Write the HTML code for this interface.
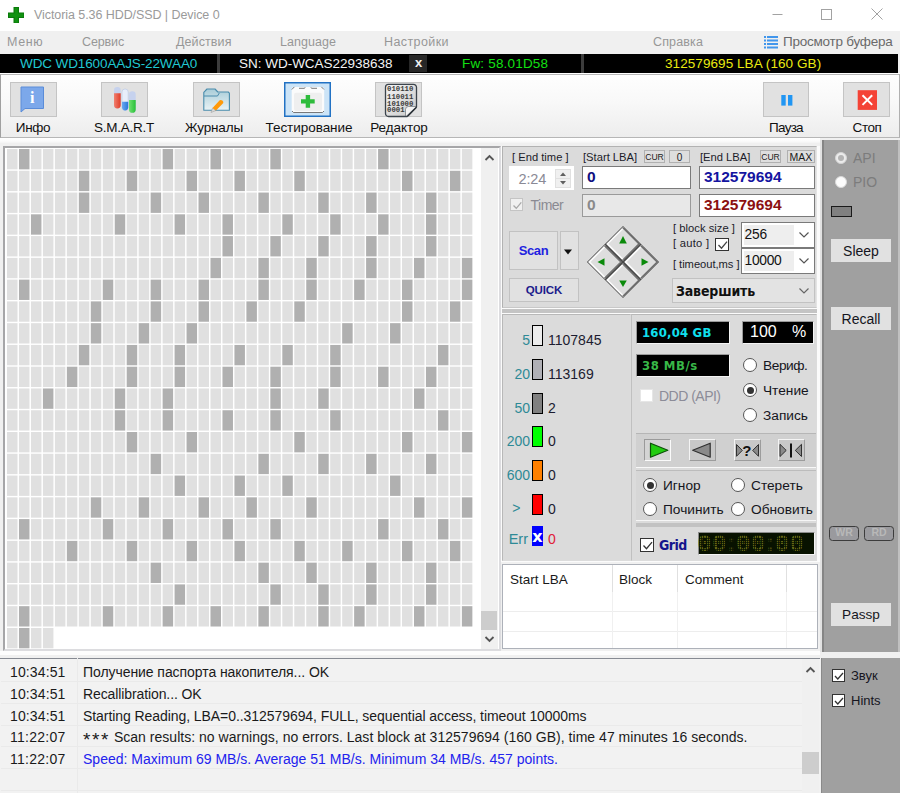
<!DOCTYPE html>
<html lang="ru">
<head>
<meta charset="utf-8">
<title>Victoria 5.36 HDD/SSD | Device 0</title>
<style>
*{box-sizing:border-box;margin:0;padding:0}
html,body{width:900px;height:793px;overflow:hidden;background:#f0f0f0}
body{position:relative;font-family:"Liberation Sans","DejaVu Sans",sans-serif;font-size:14px;color:#1a1a1a}
.abs{position:absolute}
.t{position:absolute;white-space:nowrap;line-height:1}
/* title */
#title{left:0;top:0;width:900px;height:31.500px;background:#fff}
#menu{left:0;top:31px;width:900px;height:23px;background:#f0f0f0}
#menu .t{color:#979797;font-size:12.5px;top:5px}
#drive{left:0;top:54px;width:898px;height:18.700px;background:#000}
#drive .t{font-size:13.5px;top:3px}
#drive .sep{position:absolute;top:0;width:3px;height:19px;background:#3c3c3c}
#toolbar{left:0;top:74px;width:900px;height:64px;background:linear-gradient(#fefefe,#f9f9f9 40%,#ededed);border-left:1px solid #a0a0a0;border-right:1.500px solid #b0b0b0;border-bottom:1.200px solid #b6b6b6;border-top:1.400px solid #b8b8b8}
.tb{position:absolute;top:82px;height:35px;background:#e1e1e1;border:1px solid #c4c4c4}
.tb.sel{background:#cce4f7;border-color:#2272c4;box-shadow:inset 0 0 0 .5px #2272c4}
.tl{position:absolute;top:120px;font-size:13.5px;line-height:15px;white-space:nowrap;text-align:center;color:#111}
/* panels */
.panel{position:absolute;background:#dbdbdb}
.btn{position:absolute;background:#e1e1e1;border:1px solid #c2c2c2;text-align:center;white-space:nowrap}
.lbl{position:absolute;white-space:nowrap;font-size:11.2px;line-height:12px;color:#1c1c2a}
.edit{position:absolute;background:#fff;border:1px solid #7a7a7a;font-weight:bold;white-space:nowrap}
.radio{position:absolute;width:14px;height:14px;border-radius:50%;background:#fff;border:1.200px solid #555}
.radio.on::after{content:"";position:absolute;left:2.500px;top:2.500px;width:7px;height:7px;border-radius:50%;background:#333}
.chk{position:absolute;width:14px;height:14px;background:#fff;border:1px solid #333}
.chk svg{position:absolute;left:0;top:0}
.lg{position:absolute;width:11px;height:21px;border:1px solid #000}
.lgl{position:absolute;color:#2e8a96;font-size:14px;line-height:14px;text-align:right;width:30px;white-space:nowrap}
.lgc{position:absolute;color:#1c1c30;font-size:14px;line-height:14px;white-space:nowrap}
.blk{position:absolute;background:#000;border:1px solid #9a9a9a;border-right-color:#f4f4f4;border-bottom-color:#f4f4f4;white-space:nowrap}
.rl{position:absolute;font-size:13.7px;line-height:14px;white-space:nowrap;color:#151520}
.log{position:absolute;font-size:14px;line-height:16px;white-space:nowrap;color:#1a1a1a}
</style>
</head>
<body>
<!-- title bar -->
<div id="title" class="abs">
  <svg class="abs" style="left:7.500px;top:6.500px" width="16.500" height="16.500" viewBox="0 0 15 15"><path d="M5 0h5v5h5v5h-5v5h-5v-5h-5v-5h5z" fill="#0a7a0a"/><path d="M6 1h3v5h5v3h-5v5h-3v-5h-5v-3h5z" fill="#119211"/></svg>
  <div class="t" style="left:34px;top:9px;font-size:12.5px;color:#9a9a9a;letter-spacing:-0.072px">Victoria 5.36 HDD/SSD | Device 0</div>
  <svg class="abs" style="left:765px;top:4px" width="125" height="22" viewBox="0 0 125 22" fill="none" stroke="#a2a2a2" stroke-width="1"><path d="M7.5 10.5h10"/><rect x="56.5" y="5.500" width="10" height="10"/><path d="M106.500 4.500l11 11M117.500 4.500l-11 11"/></svg>
</div>
<!-- menu -->
<div id="menu" class="abs">
  <div class="t" style="left:7px;letter-spacing:0.601px">Меню</div>
  <div class="t" style="left:82px;letter-spacing:-0.135px">Сервис</div>
  <div class="t" style="left:176px;letter-spacing:0.090px">Действия</div>
  <div class="t" style="left:280px;letter-spacing:0.047px">Language</div>
  <div class="t" style="left:384px;letter-spacing:0.411px">Настройки</div>
  <div class="t" style="left:653px;letter-spacing:0.136px">Справка</div>
  <svg class="abs" style="left:764px;top:4px" width="14" height="14" viewBox="0 0 14 14"><g fill="#4196ec"><rect x="0" y="1" width="2" height="2"/><rect x="3" y="1" width="11" height="2"/><rect x="0" y="4.500" width="2" height="2"/><rect x="3" y="4.500" width="11" height="2"/><rect x="0" y="8" width="2" height="2"/><rect x="3" y="8" width="11" height="2"/><rect x="0" y="11.500" width="2" height="2"/><rect x="3" y="11.500" width="11" height="2"/></g></svg>
  <div class="t" style="left:783px;top:4px;color:#6a6a6a;font-size:13.5px;letter-spacing:-0.239px">Просмотр буфера</div>
</div>
<!-- drive bar -->
<div id="drive" class="abs">
  <div class="t" style="left:20px;color:#20c8d2;letter-spacing:-0.113px">WDC WD1600AAJS-22WAA0</div>
  <div class="sep" style="left:217px"></div>
  <div class="t" style="left:239px;color:#f4f4f4;letter-spacing:-0.016px">SN: WD-WCAS22938638</div>
  <div class="abs" style="left:409px;top:1px;width:18px;height:17px;background:#272727"></div>
  <div class="t" style="left:415px;color:#f0f0f0;font-weight:bold;font-size:13px;top:2px">x</div>
  <div class="t" style="left:462px;color:#12e012;letter-spacing:0.179px">Fw: 58.01D58</div>
  <div class="sep" style="left:581px"></div>
  <div class="t" style="left:665px;color:#eaea10;letter-spacing:0.072px">312579695 LBA (160 GB)</div>
</div>
<div class="abs" style="left:0;top:72.700px;width:900px;height:1.500px;background:#fff"></div>
<!-- toolbar -->
<div id="toolbar" class="abs"></div>
<div class="tb" style="left:10px;width:47px"></div>
<div class="tb" style="left:101px;width:47px"></div>
<div class="tb" style="left:193px;width:47px"></div>
<div class="tb sel" style="left:284px;width:47px"></div>
<div class="tb" style="left:375px;width:47px"></div>
<div class="tb" style="left:763px;width:46px"></div>
<div class="tb" style="left:843px;width:47px"></div>
<div class="tl" style="left:3px;width:60px;letter-spacing:-0.320px">Инфо</div>
<div class="tl" style="left:84px;width:80px;letter-spacing:-0.252px">S.M.A.R.T</div>
<div class="tl" style="left:174px;width:80px;letter-spacing:-0.138px">Журналы</div>
<div class="tl" style="left:259px;width:100px;letter-spacing:-0.044px">Тестирование</div>
<div class="tl" style="left:359px;width:80px;letter-spacing:-0.078px">Редактор</div>
<div class="tl" style="left:746px;width:80px;letter-spacing:-0.743px">Пауза</div>
<div class="tl" style="left:827px;width:80px;letter-spacing:-0.452px">Стоп</div>
<!-- toolbar icons -->
<svg class="abs" style="left:0;top:74px" width="900" height="64" viewBox="0 74 900 64">
  <defs>
    <linearGradient id="gfold" x1="0" y1="0" x2="0" y2="1"><stop offset="0" stop-color="#a8ccd8"/><stop offset="1" stop-color="#eaf3f5"/></linearGradient>
    <linearGradient id="gpage" x1="0" y1="0" x2="1" y2="1"><stop offset="0" stop-color="#f4f4f4"/><stop offset="1" stop-color="#c8c8c8"/></linearGradient>
    <linearGradient id="gred" x1="0" y1="0" x2="1" y2="0"><stop offset="0" stop-color="#f08070"/><stop offset="1" stop-color="#e03c28"/></linearGradient>
    <linearGradient id="gblue" x1="0" y1="0" x2="1" y2="0"><stop offset="0" stop-color="#6aa8f0"/><stop offset="1" stop-color="#2a78d8"/></linearGradient>
    <linearGradient id="ggreen" x1="0" y1="0" x2="1" y2="0"><stop offset="0" stop-color="#70e070"/><stop offset="1" stop-color="#28c038"/></linearGradient>
  </defs>
  <!-- info bubble -->
  <path d="M21 87h22.500v21.500h-18.500l-4 3.500z" fill="#7ca8ea" stroke="#5a8cd8" stroke-width="1"/>
  <text x="32.300" y="103.300" font-family="Liberation Serif,serif" font-weight="bold" font-size="16" fill="#fff" text-anchor="middle">i</text>
  <!-- tubes -->
  <rect x="114" y="87" width="6.700" height="21.300" rx="3.200" fill="#c6d2ee"/>
  <path d="M114 93.300h6.700v11.800a3.350 3.350 0 0 1 -6.700 0z" fill="url(#gred)"/>
  <rect x="122" y="89" width="6.200" height="21.300" rx="3" fill="#e8eefa" stroke="#b4c4e4" stroke-width=".6"/>
  <path d="M122 101.700h6.200v5.600a3.100 3.100 0 0 1 -6.200 0z" fill="url(#gblue)"/>
  <rect x="129" y="91.300" width="6.700" height="21.400" rx="3.200" fill="#c6d2ee"/>
  <path d="M129 100h6.700v9.400a3.350 3.350 0 0 1 -6.700 0z" fill="url(#ggreen)"/>
  <!-- folder -->
  <path d="M203.800 110.300v-18l3.200-3.300h8l2.800 3h10.400l1.200 1.200v17.100z" fill="url(#gfold)" stroke="#4a8cac" stroke-width="1.100" stroke-linejoin="round"/>
  <path d="M204 96h13.500l1.800-3" fill="none" stroke="#4a8cac" stroke-width="1"/>
  <path d="M211 112.500l1.500-4.500 3.500 2.500z" fill="#d8d8d8" stroke="#888" stroke-width=".4"/>
  <path d="M212.500 108l7.200-7.800a2.600 2.600 0 0 1 3.600 2.800l-7.300 7.600z" fill="#ff9a0a"/>
  <!-- first-aid kit -->
  <rect x="291.700" y="87" width="32.500" height="25.700" rx="2.500" fill="#fbfbfb"/>
  <rect x="294" y="92.700" width="28" height="18.300" rx="2" fill="#efefef"/>
  <path d="M291.800 89.500l2.600-2.600M324 89.500l-2.600-2.600M299 88.300h5.500l.6-1M317 88.300h-5.500l-.6-1M292 111l1.500 1.500h29l1.500-1.500" fill="none" stroke="#6a6a6a" stroke-width=".9"/>
  <path d="M305.700 95h4.400v4.200h4.600v4.300h-4.600v4.300h-4.400v-4.300h-4.700v-4.300h4.700z" fill="#2ebc3c"/>
  <!-- binary page -->
  <path d="M388.500 84.300h25a3 3 0 0 1 3 3v19.500l-9.500 9.700h-18.500a3 3 0 0 1 -3-3v-26.200a3 3 0 0 1 3-3z" fill="url(#gpage)" stroke="#3c444c" stroke-width="1.300"/>
  <path d="M416.500 106.800l-9.500 9.700 1.500-.2 8.200-8.200z" fill="#20262c"/>
  <path d="M405.500 116v-6.500a3 3 0 0 1 3-3h7.500" fill="#f4f4f4" stroke="#3c444c" stroke-width=".5"/>
  <g font-family="Liberation Mono,monospace" font-size="7.300" fill="#3a3a3a" font-weight="bold">
    <text x="387" y="91.200">010110</text>
    <text x="387" y="98.500">110011</text>
    <text x="387" y="105.800">101000</text>
    <text x="387" y="112.400">0001</text>
  </g>
  <!-- pause -->
  <rect x="781.300" y="95" width="4.400" height="10.600" fill="#2196f3"/>
  <rect x="788" y="95" width="4.400" height="10.600" fill="#2196f3"/>
  <!-- stop -->
  <rect x="857.700" y="90.200" width="19.300" height="19.700" fill="#f44336"/>
  <path d="M862.500 95.200l9.700 9.700M872.200 95.200l-9.700 9.700" stroke="#fff" stroke-width="2"/>
</svg>

<div class="abs" style="left:0;top:138px;width:820px;height:5px;background:linear-gradient(#ffffff,#fbfbfb 60%,#f3f3f3)"></div>
<!-- grid frame -->
<div class="abs" style="left:3px;top:146px;width:498px;height:505px;background:#fff;border:2px solid #a6a6a8;border-right-color:#dcdcdf;border-bottom-color:#dcdcdf"></div>
<div class="abs" style="left:481px;top:148px;width:17px;height:501px;background:#f0f0f0"></div>
<div class="abs" style="left:481px;top:611px;width:16px;height:19px;background:#cdcdcd"></div>
<svg class="abs" style="left:481px;top:148px" width="17" height="501" viewBox="0 0 17 501" fill="none" stroke="#555" stroke-width="1.800"><path d="M4.500 12l4-4 4 4"/><path d="M4.500 489l4 4 4-4"/></svg>
<svg class="gridsvg" width="900" height="793" viewBox="0 0 900 793" style="position:absolute;left:0;top:0"><rect x="7.00" y="149.00" width="10.5" height="20.35" fill="#e0e0e0"/><rect x="18.97" y="149.00" width="10.5" height="20.35" fill="#b0b0b0"/><rect x="30.94" y="149.00" width="10.5" height="20.35" fill="#e0e0e0"/><rect x="42.91" y="149.00" width="10.5" height="20.35" fill="#e0e0e0"/><rect x="54.88" y="149.00" width="10.5" height="20.35" fill="#e0e0e0"/><rect x="66.85" y="149.00" width="10.5" height="20.35" fill="#e0e0e0"/><rect x="78.82" y="149.00" width="10.5" height="20.35" fill="#e0e0e0"/><rect x="90.79" y="149.00" width="10.5" height="20.35" fill="#e0e0e0"/><rect x="102.76" y="149.00" width="10.5" height="20.35" fill="#e0e0e0"/><rect x="114.73" y="149.00" width="10.5" height="20.35" fill="#e0e0e0"/><rect x="126.70" y="149.00" width="10.5" height="20.35" fill="#e0e0e0"/><rect x="138.67" y="149.00" width="10.5" height="20.35" fill="#e0e0e0"/><rect x="150.64" y="149.00" width="10.5" height="20.35" fill="#e0e0e0"/><rect x="162.61" y="149.00" width="10.5" height="20.35" fill="#b0b0b0"/><rect x="174.58" y="149.00" width="10.5" height="20.35" fill="#e0e0e0"/><rect x="186.55" y="149.00" width="10.5" height="20.35" fill="#e0e0e0"/><rect x="198.52" y="149.00" width="10.5" height="20.35" fill="#e0e0e0"/><rect x="210.49" y="149.00" width="10.5" height="20.35" fill="#b0b0b0"/><rect x="222.46" y="149.00" width="10.5" height="20.35" fill="#e0e0e0"/><rect x="234.43" y="149.00" width="10.5" height="20.35" fill="#e0e0e0"/><rect x="246.40" y="149.00" width="10.5" height="20.35" fill="#e0e0e0"/><rect x="258.37" y="149.00" width="10.5" height="20.35" fill="#e0e0e0"/><rect x="270.34" y="149.00" width="10.5" height="20.35" fill="#b0b0b0"/><rect x="282.31" y="149.00" width="10.5" height="20.35" fill="#e0e0e0"/><rect x="294.28" y="149.00" width="10.5" height="20.35" fill="#e0e0e0"/><rect x="306.25" y="149.00" width="10.5" height="20.35" fill="#e0e0e0"/><rect x="318.22" y="149.00" width="10.5" height="20.35" fill="#e0e0e0"/><rect x="330.19" y="149.00" width="10.5" height="20.35" fill="#e0e0e0"/><rect x="342.16" y="149.00" width="10.5" height="20.35" fill="#e0e0e0"/><rect x="354.13" y="149.00" width="10.5" height="20.35" fill="#e0e0e0"/><rect x="366.10" y="149.00" width="10.5" height="20.35" fill="#e0e0e0"/><rect x="378.07" y="149.00" width="10.5" height="20.35" fill="#b0b0b0"/><rect x="390.04" y="149.00" width="10.5" height="20.35" fill="#e0e0e0"/><rect x="402.01" y="149.00" width="10.5" height="20.35" fill="#e0e0e0"/><rect x="413.98" y="149.00" width="10.5" height="20.35" fill="#e0e0e0"/><rect x="425.95" y="149.00" width="10.5" height="20.35" fill="#e0e0e0"/><rect x="437.92" y="149.00" width="10.5" height="20.35" fill="#e0e0e0"/><rect x="449.89" y="149.00" width="10.5" height="20.35" fill="#e0e0e0"/><rect x="461.86" y="149.00" width="10.5" height="20.35" fill="#e0e0e0"/><rect x="7.00" y="170.77" width="10.5" height="20.35" fill="#e0e0e0"/><rect x="18.97" y="170.77" width="10.5" height="20.35" fill="#e0e0e0"/><rect x="30.94" y="170.77" width="10.5" height="20.35" fill="#e0e0e0"/><rect x="42.91" y="170.77" width="10.5" height="20.35" fill="#e0e0e0"/><rect x="54.88" y="170.77" width="10.5" height="20.35" fill="#e0e0e0"/><rect x="66.85" y="170.77" width="10.5" height="20.35" fill="#e0e0e0"/><rect x="78.82" y="170.77" width="10.5" height="20.35" fill="#b0b0b0"/><rect x="90.79" y="170.77" width="10.5" height="20.35" fill="#e0e0e0"/><rect x="102.76" y="170.77" width="10.5" height="20.35" fill="#e0e0e0"/><rect x="114.73" y="170.77" width="10.5" height="20.35" fill="#e0e0e0"/><rect x="126.70" y="170.77" width="10.5" height="20.35" fill="#b0b0b0"/><rect x="138.67" y="170.77" width="10.5" height="20.35" fill="#e0e0e0"/><rect x="150.64" y="170.77" width="10.5" height="20.35" fill="#e0e0e0"/><rect x="162.61" y="170.77" width="10.5" height="20.35" fill="#e0e0e0"/><rect x="174.58" y="170.77" width="10.5" height="20.35" fill="#e0e0e0"/><rect x="186.55" y="170.77" width="10.5" height="20.35" fill="#b0b0b0"/><rect x="198.52" y="170.77" width="10.5" height="20.35" fill="#e0e0e0"/><rect x="210.49" y="170.77" width="10.5" height="20.35" fill="#e0e0e0"/><rect x="222.46" y="170.77" width="10.5" height="20.35" fill="#e0e0e0"/><rect x="234.43" y="170.77" width="10.5" height="20.35" fill="#b0b0b0"/><rect x="246.40" y="170.77" width="10.5" height="20.35" fill="#e0e0e0"/><rect x="258.37" y="170.77" width="10.5" height="20.35" fill="#e0e0e0"/><rect x="270.34" y="170.77" width="10.5" height="20.35" fill="#e0e0e0"/><rect x="282.31" y="170.77" width="10.5" height="20.35" fill="#e0e0e0"/><rect x="294.28" y="170.77" width="10.5" height="20.35" fill="#b0b0b0"/><rect x="306.25" y="170.77" width="10.5" height="20.35" fill="#e0e0e0"/><rect x="318.22" y="170.77" width="10.5" height="20.35" fill="#e0e0e0"/><rect x="330.19" y="170.77" width="10.5" height="20.35" fill="#e0e0e0"/><rect x="342.16" y="170.77" width="10.5" height="20.35" fill="#e0e0e0"/><rect x="354.13" y="170.77" width="10.5" height="20.35" fill="#e0e0e0"/><rect x="366.10" y="170.77" width="10.5" height="20.35" fill="#e0e0e0"/><rect x="378.07" y="170.77" width="10.5" height="20.35" fill="#e0e0e0"/><rect x="390.04" y="170.77" width="10.5" height="20.35" fill="#e0e0e0"/><rect x="402.01" y="170.77" width="10.5" height="20.35" fill="#b0b0b0"/><rect x="413.98" y="170.77" width="10.5" height="20.35" fill="#e0e0e0"/><rect x="425.95" y="170.77" width="10.5" height="20.35" fill="#e0e0e0"/><rect x="437.92" y="170.77" width="10.5" height="20.35" fill="#e0e0e0"/><rect x="449.89" y="170.77" width="10.5" height="20.35" fill="#b0b0b0"/><rect x="461.86" y="170.77" width="10.5" height="20.35" fill="#e0e0e0"/><rect x="7.00" y="192.54" width="10.5" height="20.35" fill="#e0e0e0"/><rect x="18.97" y="192.54" width="10.5" height="20.35" fill="#e0e0e0"/><rect x="30.94" y="192.54" width="10.5" height="20.35" fill="#e0e0e0"/><rect x="42.91" y="192.54" width="10.5" height="20.35" fill="#e0e0e0"/><rect x="54.88" y="192.54" width="10.5" height="20.35" fill="#e0e0e0"/><rect x="66.85" y="192.54" width="10.5" height="20.35" fill="#e0e0e0"/><rect x="78.82" y="192.54" width="10.5" height="20.35" fill="#b0b0b0"/><rect x="90.79" y="192.54" width="10.5" height="20.35" fill="#e0e0e0"/><rect x="102.76" y="192.54" width="10.5" height="20.35" fill="#e0e0e0"/><rect x="114.73" y="192.54" width="10.5" height="20.35" fill="#e0e0e0"/><rect x="126.70" y="192.54" width="10.5" height="20.35" fill="#e0e0e0"/><rect x="138.67" y="192.54" width="10.5" height="20.35" fill="#e0e0e0"/><rect x="150.64" y="192.54" width="10.5" height="20.35" fill="#b0b0b0"/><rect x="162.61" y="192.54" width="10.5" height="20.35" fill="#e0e0e0"/><rect x="174.58" y="192.54" width="10.5" height="20.35" fill="#e0e0e0"/><rect x="186.55" y="192.54" width="10.5" height="20.35" fill="#e0e0e0"/><rect x="198.52" y="192.54" width="10.5" height="20.35" fill="#b0b0b0"/><rect x="210.49" y="192.54" width="10.5" height="20.35" fill="#e0e0e0"/><rect x="222.46" y="192.54" width="10.5" height="20.35" fill="#e0e0e0"/><rect x="234.43" y="192.54" width="10.5" height="20.35" fill="#e0e0e0"/><rect x="246.40" y="192.54" width="10.5" height="20.35" fill="#e0e0e0"/><rect x="258.37" y="192.54" width="10.5" height="20.35" fill="#b0b0b0"/><rect x="270.34" y="192.54" width="10.5" height="20.35" fill="#e0e0e0"/><rect x="282.31" y="192.54" width="10.5" height="20.35" fill="#e0e0e0"/><rect x="294.28" y="192.54" width="10.5" height="20.35" fill="#e0e0e0"/><rect x="306.25" y="192.54" width="10.5" height="20.35" fill="#e0e0e0"/><rect x="318.22" y="192.54" width="10.5" height="20.35" fill="#b0b0b0"/><rect x="330.19" y="192.54" width="10.5" height="20.35" fill="#e0e0e0"/><rect x="342.16" y="192.54" width="10.5" height="20.35" fill="#e0e0e0"/><rect x="354.13" y="192.54" width="10.5" height="20.35" fill="#e0e0e0"/><rect x="366.10" y="192.54" width="10.5" height="20.35" fill="#b0b0b0"/><rect x="378.07" y="192.54" width="10.5" height="20.35" fill="#e0e0e0"/><rect x="390.04" y="192.54" width="10.5" height="20.35" fill="#e0e0e0"/><rect x="402.01" y="192.54" width="10.5" height="20.35" fill="#e0e0e0"/><rect x="413.98" y="192.54" width="10.5" height="20.35" fill="#e0e0e0"/><rect x="425.95" y="192.54" width="10.5" height="20.35" fill="#b0b0b0"/><rect x="437.92" y="192.54" width="10.5" height="20.35" fill="#e0e0e0"/><rect x="449.89" y="192.54" width="10.5" height="20.35" fill="#e0e0e0"/><rect x="461.86" y="192.54" width="10.5" height="20.35" fill="#e0e0e0"/><rect x="7.00" y="214.31" width="10.5" height="20.35" fill="#e0e0e0"/><rect x="18.97" y="214.31" width="10.5" height="20.35" fill="#e0e0e0"/><rect x="30.94" y="214.31" width="10.5" height="20.35" fill="#b0b0b0"/><rect x="42.91" y="214.31" width="10.5" height="20.35" fill="#e0e0e0"/><rect x="54.88" y="214.31" width="10.5" height="20.35" fill="#e0e0e0"/><rect x="66.85" y="214.31" width="10.5" height="20.35" fill="#e0e0e0"/><rect x="78.82" y="214.31" width="10.5" height="20.35" fill="#e0e0e0"/><rect x="90.79" y="214.31" width="10.5" height="20.35" fill="#e0e0e0"/><rect x="102.76" y="214.31" width="10.5" height="20.35" fill="#e0e0e0"/><rect x="114.73" y="214.31" width="10.5" height="20.35" fill="#b0b0b0"/><rect x="126.70" y="214.31" width="10.5" height="20.35" fill="#e0e0e0"/><rect x="138.67" y="214.31" width="10.5" height="20.35" fill="#e0e0e0"/><rect x="150.64" y="214.31" width="10.5" height="20.35" fill="#e0e0e0"/><rect x="162.61" y="214.31" width="10.5" height="20.35" fill="#e0e0e0"/><rect x="174.58" y="214.31" width="10.5" height="20.35" fill="#b0b0b0"/><rect x="186.55" y="214.31" width="10.5" height="20.35" fill="#e0e0e0"/><rect x="198.52" y="214.31" width="10.5" height="20.35" fill="#e0e0e0"/><rect x="210.49" y="214.31" width="10.5" height="20.35" fill="#e0e0e0"/><rect x="222.46" y="214.31" width="10.5" height="20.35" fill="#b0b0b0"/><rect x="234.43" y="214.31" width="10.5" height="20.35" fill="#e0e0e0"/><rect x="246.40" y="214.31" width="10.5" height="20.35" fill="#e0e0e0"/><rect x="258.37" y="214.31" width="10.5" height="20.35" fill="#e0e0e0"/><rect x="270.34" y="214.31" width="10.5" height="20.35" fill="#e0e0e0"/><rect x="282.31" y="214.31" width="10.5" height="20.35" fill="#b0b0b0"/><rect x="294.28" y="214.31" width="10.5" height="20.35" fill="#e0e0e0"/><rect x="306.25" y="214.31" width="10.5" height="20.35" fill="#e0e0e0"/><rect x="318.22" y="214.31" width="10.5" height="20.35" fill="#e0e0e0"/><rect x="330.19" y="214.31" width="10.5" height="20.35" fill="#b0b0b0"/><rect x="342.16" y="214.31" width="10.5" height="20.35" fill="#e0e0e0"/><rect x="354.13" y="214.31" width="10.5" height="20.35" fill="#e0e0e0"/><rect x="366.10" y="214.31" width="10.5" height="20.35" fill="#e0e0e0"/><rect x="378.07" y="214.31" width="10.5" height="20.35" fill="#b0b0b0"/><rect x="390.04" y="214.31" width="10.5" height="20.35" fill="#e0e0e0"/><rect x="402.01" y="214.31" width="10.5" height="20.35" fill="#e0e0e0"/><rect x="413.98" y="214.31" width="10.5" height="20.35" fill="#e0e0e0"/><rect x="425.95" y="214.31" width="10.5" height="20.35" fill="#b0b0b0"/><rect x="437.92" y="214.31" width="10.5" height="20.35" fill="#e0e0e0"/><rect x="449.89" y="214.31" width="10.5" height="20.35" fill="#e0e0e0"/><rect x="461.86" y="214.31" width="10.5" height="20.35" fill="#e0e0e0"/><rect x="7.00" y="236.08" width="10.5" height="20.35" fill="#e0e0e0"/><rect x="18.97" y="236.08" width="10.5" height="20.35" fill="#e0e0e0"/><rect x="30.94" y="236.08" width="10.5" height="20.35" fill="#e0e0e0"/><rect x="42.91" y="236.08" width="10.5" height="20.35" fill="#e0e0e0"/><rect x="54.88" y="236.08" width="10.5" height="20.35" fill="#e0e0e0"/><rect x="66.85" y="236.08" width="10.5" height="20.35" fill="#e0e0e0"/><rect x="78.82" y="236.08" width="10.5" height="20.35" fill="#e0e0e0"/><rect x="90.79" y="236.08" width="10.5" height="20.35" fill="#e0e0e0"/><rect x="102.76" y="236.08" width="10.5" height="20.35" fill="#e0e0e0"/><rect x="114.73" y="236.08" width="10.5" height="20.35" fill="#e0e0e0"/><rect x="126.70" y="236.08" width="10.5" height="20.35" fill="#e0e0e0"/><rect x="138.67" y="236.08" width="10.5" height="20.35" fill="#e0e0e0"/><rect x="150.64" y="236.08" width="10.5" height="20.35" fill="#e0e0e0"/><rect x="162.61" y="236.08" width="10.5" height="20.35" fill="#e0e0e0"/><rect x="174.58" y="236.08" width="10.5" height="20.35" fill="#e0e0e0"/><rect x="186.55" y="236.08" width="10.5" height="20.35" fill="#e0e0e0"/><rect x="198.52" y="236.08" width="10.5" height="20.35" fill="#e0e0e0"/><rect x="210.49" y="236.08" width="10.5" height="20.35" fill="#e0e0e0"/><rect x="222.46" y="236.08" width="10.5" height="20.35" fill="#b0b0b0"/><rect x="234.43" y="236.08" width="10.5" height="20.35" fill="#e0e0e0"/><rect x="246.40" y="236.08" width="10.5" height="20.35" fill="#e0e0e0"/><rect x="258.37" y="236.08" width="10.5" height="20.35" fill="#e0e0e0"/><rect x="270.34" y="236.08" width="10.5" height="20.35" fill="#b0b0b0"/><rect x="282.31" y="236.08" width="10.5" height="20.35" fill="#e0e0e0"/><rect x="294.28" y="236.08" width="10.5" height="20.35" fill="#e0e0e0"/><rect x="306.25" y="236.08" width="10.5" height="20.35" fill="#e0e0e0"/><rect x="318.22" y="236.08" width="10.5" height="20.35" fill="#b0b0b0"/><rect x="330.19" y="236.08" width="10.5" height="20.35" fill="#e0e0e0"/><rect x="342.16" y="236.08" width="10.5" height="20.35" fill="#e0e0e0"/><rect x="354.13" y="236.08" width="10.5" height="20.35" fill="#e0e0e0"/><rect x="366.10" y="236.08" width="10.5" height="20.35" fill="#b0b0b0"/><rect x="378.07" y="236.08" width="10.5" height="20.35" fill="#e0e0e0"/><rect x="390.04" y="236.08" width="10.5" height="20.35" fill="#e0e0e0"/><rect x="402.01" y="236.08" width="10.5" height="20.35" fill="#e0e0e0"/><rect x="413.98" y="236.08" width="10.5" height="20.35" fill="#e0e0e0"/><rect x="425.95" y="236.08" width="10.5" height="20.35" fill="#b0b0b0"/><rect x="437.92" y="236.08" width="10.5" height="20.35" fill="#e0e0e0"/><rect x="449.89" y="236.08" width="10.5" height="20.35" fill="#e0e0e0"/><rect x="461.86" y="236.08" width="10.5" height="20.35" fill="#e0e0e0"/><rect x="7.00" y="257.85" width="10.5" height="20.35" fill="#e0e0e0"/><rect x="18.97" y="257.85" width="10.5" height="20.35" fill="#e0e0e0"/><rect x="30.94" y="257.85" width="10.5" height="20.35" fill="#e0e0e0"/><rect x="42.91" y="257.85" width="10.5" height="20.35" fill="#e0e0e0"/><rect x="54.88" y="257.85" width="10.5" height="20.35" fill="#e0e0e0"/><rect x="66.85" y="257.85" width="10.5" height="20.35" fill="#e0e0e0"/><rect x="78.82" y="257.85" width="10.5" height="20.35" fill="#e0e0e0"/><rect x="90.79" y="257.85" width="10.5" height="20.35" fill="#e0e0e0"/><rect x="102.76" y="257.85" width="10.5" height="20.35" fill="#e0e0e0"/><rect x="114.73" y="257.85" width="10.5" height="20.35" fill="#e0e0e0"/><rect x="126.70" y="257.85" width="10.5" height="20.35" fill="#e0e0e0"/><rect x="138.67" y="257.85" width="10.5" height="20.35" fill="#e0e0e0"/><rect x="150.64" y="257.85" width="10.5" height="20.35" fill="#e0e0e0"/><rect x="162.61" y="257.85" width="10.5" height="20.35" fill="#e0e0e0"/><rect x="174.58" y="257.85" width="10.5" height="20.35" fill="#e0e0e0"/><rect x="186.55" y="257.85" width="10.5" height="20.35" fill="#e0e0e0"/><rect x="198.52" y="257.85" width="10.5" height="20.35" fill="#e0e0e0"/><rect x="210.49" y="257.85" width="10.5" height="20.35" fill="#b0b0b0"/><rect x="222.46" y="257.85" width="10.5" height="20.35" fill="#e0e0e0"/><rect x="234.43" y="257.85" width="10.5" height="20.35" fill="#e0e0e0"/><rect x="246.40" y="257.85" width="10.5" height="20.35" fill="#e0e0e0"/><rect x="258.37" y="257.85" width="10.5" height="20.35" fill="#b0b0b0"/><rect x="270.34" y="257.85" width="10.5" height="20.35" fill="#e0e0e0"/><rect x="282.31" y="257.85" width="10.5" height="20.35" fill="#e0e0e0"/><rect x="294.28" y="257.85" width="10.5" height="20.35" fill="#e0e0e0"/><rect x="306.25" y="257.85" width="10.5" height="20.35" fill="#b0b0b0"/><rect x="318.22" y="257.85" width="10.5" height="20.35" fill="#e0e0e0"/><rect x="330.19" y="257.85" width="10.5" height="20.35" fill="#e0e0e0"/><rect x="342.16" y="257.85" width="10.5" height="20.35" fill="#e0e0e0"/><rect x="354.13" y="257.85" width="10.5" height="20.35" fill="#e0e0e0"/><rect x="366.10" y="257.85" width="10.5" height="20.35" fill="#b0b0b0"/><rect x="378.07" y="257.85" width="10.5" height="20.35" fill="#e0e0e0"/><rect x="390.04" y="257.85" width="10.5" height="20.35" fill="#e0e0e0"/><rect x="402.01" y="257.85" width="10.5" height="20.35" fill="#e0e0e0"/><rect x="413.98" y="257.85" width="10.5" height="20.35" fill="#b0b0b0"/><rect x="425.95" y="257.85" width="10.5" height="20.35" fill="#e0e0e0"/><rect x="437.92" y="257.85" width="10.5" height="20.35" fill="#e0e0e0"/><rect x="449.89" y="257.85" width="10.5" height="20.35" fill="#e0e0e0"/><rect x="461.86" y="257.85" width="10.5" height="20.35" fill="#b0b0b0"/><rect x="7.00" y="279.62" width="10.5" height="20.35" fill="#e0e0e0"/><rect x="18.97" y="279.62" width="10.5" height="20.35" fill="#b0b0b0"/><rect x="30.94" y="279.62" width="10.5" height="20.35" fill="#e0e0e0"/><rect x="42.91" y="279.62" width="10.5" height="20.35" fill="#e0e0e0"/><rect x="54.88" y="279.62" width="10.5" height="20.35" fill="#e0e0e0"/><rect x="66.85" y="279.62" width="10.5" height="20.35" fill="#e0e0e0"/><rect x="78.82" y="279.62" width="10.5" height="20.35" fill="#e0e0e0"/><rect x="90.79" y="279.62" width="10.5" height="20.35" fill="#e0e0e0"/><rect x="102.76" y="279.62" width="10.5" height="20.35" fill="#b0b0b0"/><rect x="114.73" y="279.62" width="10.5" height="20.35" fill="#e0e0e0"/><rect x="126.70" y="279.62" width="10.5" height="20.35" fill="#e0e0e0"/><rect x="138.67" y="279.62" width="10.5" height="20.35" fill="#e0e0e0"/><rect x="150.64" y="279.62" width="10.5" height="20.35" fill="#b0b0b0"/><rect x="162.61" y="279.62" width="10.5" height="20.35" fill="#e0e0e0"/><rect x="174.58" y="279.62" width="10.5" height="20.35" fill="#e0e0e0"/><rect x="186.55" y="279.62" width="10.5" height="20.35" fill="#e0e0e0"/><rect x="198.52" y="279.62" width="10.5" height="20.35" fill="#b0b0b0"/><rect x="210.49" y="279.62" width="10.5" height="20.35" fill="#e0e0e0"/><rect x="222.46" y="279.62" width="10.5" height="20.35" fill="#e0e0e0"/><rect x="234.43" y="279.62" width="10.5" height="20.35" fill="#e0e0e0"/><rect x="246.40" y="279.62" width="10.5" height="20.35" fill="#e0e0e0"/><rect x="258.37" y="279.62" width="10.5" height="20.35" fill="#b0b0b0"/><rect x="270.34" y="279.62" width="10.5" height="20.35" fill="#e0e0e0"/><rect x="282.31" y="279.62" width="10.5" height="20.35" fill="#e0e0e0"/><rect x="294.28" y="279.62" width="10.5" height="20.35" fill="#e0e0e0"/><rect x="306.25" y="279.62" width="10.5" height="20.35" fill="#b0b0b0"/><rect x="318.22" y="279.62" width="10.5" height="20.35" fill="#e0e0e0"/><rect x="330.19" y="279.62" width="10.5" height="20.35" fill="#e0e0e0"/><rect x="342.16" y="279.62" width="10.5" height="20.35" fill="#e0e0e0"/><rect x="354.13" y="279.62" width="10.5" height="20.35" fill="#b0b0b0"/><rect x="366.10" y="279.62" width="10.5" height="20.35" fill="#e0e0e0"/><rect x="378.07" y="279.62" width="10.5" height="20.35" fill="#e0e0e0"/><rect x="390.04" y="279.62" width="10.5" height="20.35" fill="#e0e0e0"/><rect x="402.01" y="279.62" width="10.5" height="20.35" fill="#b0b0b0"/><rect x="413.98" y="279.62" width="10.5" height="20.35" fill="#e0e0e0"/><rect x="425.95" y="279.62" width="10.5" height="20.35" fill="#e0e0e0"/><rect x="437.92" y="279.62" width="10.5" height="20.35" fill="#e0e0e0"/><rect x="449.89" y="279.62" width="10.5" height="20.35" fill="#e0e0e0"/><rect x="461.86" y="279.62" width="10.5" height="20.35" fill="#b0b0b0"/><rect x="7.00" y="301.39" width="10.5" height="20.35" fill="#e0e0e0"/><rect x="18.97" y="301.39" width="10.5" height="20.35" fill="#e0e0e0"/><rect x="30.94" y="301.39" width="10.5" height="20.35" fill="#e0e0e0"/><rect x="42.91" y="301.39" width="10.5" height="20.35" fill="#e0e0e0"/><rect x="54.88" y="301.39" width="10.5" height="20.35" fill="#e0e0e0"/><rect x="66.85" y="301.39" width="10.5" height="20.35" fill="#e0e0e0"/><rect x="78.82" y="301.39" width="10.5" height="20.35" fill="#e0e0e0"/><rect x="90.79" y="301.39" width="10.5" height="20.35" fill="#b0b0b0"/><rect x="102.76" y="301.39" width="10.5" height="20.35" fill="#e0e0e0"/><rect x="114.73" y="301.39" width="10.5" height="20.35" fill="#e0e0e0"/><rect x="126.70" y="301.39" width="10.5" height="20.35" fill="#e0e0e0"/><rect x="138.67" y="301.39" width="10.5" height="20.35" fill="#e0e0e0"/><rect x="150.64" y="301.39" width="10.5" height="20.35" fill="#b0b0b0"/><rect x="162.61" y="301.39" width="10.5" height="20.35" fill="#e0e0e0"/><rect x="174.58" y="301.39" width="10.5" height="20.35" fill="#e0e0e0"/><rect x="186.55" y="301.39" width="10.5" height="20.35" fill="#e0e0e0"/><rect x="198.52" y="301.39" width="10.5" height="20.35" fill="#b0b0b0"/><rect x="210.49" y="301.39" width="10.5" height="20.35" fill="#e0e0e0"/><rect x="222.46" y="301.39" width="10.5" height="20.35" fill="#e0e0e0"/><rect x="234.43" y="301.39" width="10.5" height="20.35" fill="#e0e0e0"/><rect x="246.40" y="301.39" width="10.5" height="20.35" fill="#b0b0b0"/><rect x="258.37" y="301.39" width="10.5" height="20.35" fill="#e0e0e0"/><rect x="270.34" y="301.39" width="10.5" height="20.35" fill="#e0e0e0"/><rect x="282.31" y="301.39" width="10.5" height="20.35" fill="#e0e0e0"/><rect x="294.28" y="301.39" width="10.5" height="20.35" fill="#b0b0b0"/><rect x="306.25" y="301.39" width="10.5" height="20.35" fill="#e0e0e0"/><rect x="318.22" y="301.39" width="10.5" height="20.35" fill="#e0e0e0"/><rect x="330.19" y="301.39" width="10.5" height="20.35" fill="#e0e0e0"/><rect x="342.16" y="301.39" width="10.5" height="20.35" fill="#e0e0e0"/><rect x="354.13" y="301.39" width="10.5" height="20.35" fill="#e0e0e0"/><rect x="366.10" y="301.39" width="10.5" height="20.35" fill="#e0e0e0"/><rect x="378.07" y="301.39" width="10.5" height="20.35" fill="#e0e0e0"/><rect x="390.04" y="301.39" width="10.5" height="20.35" fill="#e0e0e0"/><rect x="402.01" y="301.39" width="10.5" height="20.35" fill="#b0b0b0"/><rect x="413.98" y="301.39" width="10.5" height="20.35" fill="#e0e0e0"/><rect x="425.95" y="301.39" width="10.5" height="20.35" fill="#e0e0e0"/><rect x="437.92" y="301.39" width="10.5" height="20.35" fill="#e0e0e0"/><rect x="449.89" y="301.39" width="10.5" height="20.35" fill="#b0b0b0"/><rect x="461.86" y="301.39" width="10.5" height="20.35" fill="#e0e0e0"/><rect x="7.00" y="323.16" width="10.5" height="20.35" fill="#e0e0e0"/><rect x="18.97" y="323.16" width="10.5" height="20.35" fill="#e0e0e0"/><rect x="30.94" y="323.16" width="10.5" height="20.35" fill="#e0e0e0"/><rect x="42.91" y="323.16" width="10.5" height="20.35" fill="#e0e0e0"/><rect x="54.88" y="323.16" width="10.5" height="20.35" fill="#e0e0e0"/><rect x="66.85" y="323.16" width="10.5" height="20.35" fill="#e0e0e0"/><rect x="78.82" y="323.16" width="10.5" height="20.35" fill="#e0e0e0"/><rect x="90.79" y="323.16" width="10.5" height="20.35" fill="#b0b0b0"/><rect x="102.76" y="323.16" width="10.5" height="20.35" fill="#e0e0e0"/><rect x="114.73" y="323.16" width="10.5" height="20.35" fill="#e0e0e0"/><rect x="126.70" y="323.16" width="10.5" height="20.35" fill="#e0e0e0"/><rect x="138.67" y="323.16" width="10.5" height="20.35" fill="#b0b0b0"/><rect x="150.64" y="323.16" width="10.5" height="20.35" fill="#e0e0e0"/><rect x="162.61" y="323.16" width="10.5" height="20.35" fill="#e0e0e0"/><rect x="174.58" y="323.16" width="10.5" height="20.35" fill="#e0e0e0"/><rect x="186.55" y="323.16" width="10.5" height="20.35" fill="#b0b0b0"/><rect x="198.52" y="323.16" width="10.5" height="20.35" fill="#e0e0e0"/><rect x="210.49" y="323.16" width="10.5" height="20.35" fill="#e0e0e0"/><rect x="222.46" y="323.16" width="10.5" height="20.35" fill="#e0e0e0"/><rect x="234.43" y="323.16" width="10.5" height="20.35" fill="#e0e0e0"/><rect x="246.40" y="323.16" width="10.5" height="20.35" fill="#e0e0e0"/><rect x="258.37" y="323.16" width="10.5" height="20.35" fill="#e0e0e0"/><rect x="270.34" y="323.16" width="10.5" height="20.35" fill="#e0e0e0"/><rect x="282.31" y="323.16" width="10.5" height="20.35" fill="#e0e0e0"/><rect x="294.28" y="323.16" width="10.5" height="20.35" fill="#e0e0e0"/><rect x="306.25" y="323.16" width="10.5" height="20.35" fill="#e0e0e0"/><rect x="318.22" y="323.16" width="10.5" height="20.35" fill="#e0e0e0"/><rect x="330.19" y="323.16" width="10.5" height="20.35" fill="#e0e0e0"/><rect x="342.16" y="323.16" width="10.5" height="20.35" fill="#b0b0b0"/><rect x="354.13" y="323.16" width="10.5" height="20.35" fill="#e0e0e0"/><rect x="366.10" y="323.16" width="10.5" height="20.35" fill="#e0e0e0"/><rect x="378.07" y="323.16" width="10.5" height="20.35" fill="#e0e0e0"/><rect x="390.04" y="323.16" width="10.5" height="20.35" fill="#b0b0b0"/><rect x="402.01" y="323.16" width="10.5" height="20.35" fill="#e0e0e0"/><rect x="413.98" y="323.16" width="10.5" height="20.35" fill="#e0e0e0"/><rect x="425.95" y="323.16" width="10.5" height="20.35" fill="#e0e0e0"/><rect x="437.92" y="323.16" width="10.5" height="20.35" fill="#e0e0e0"/><rect x="449.89" y="323.16" width="10.5" height="20.35" fill="#e0e0e0"/><rect x="461.86" y="323.16" width="10.5" height="20.35" fill="#e0e0e0"/><rect x="7.00" y="344.93" width="10.5" height="20.35" fill="#e0e0e0"/><rect x="18.97" y="344.93" width="10.5" height="20.35" fill="#e0e0e0"/><rect x="30.94" y="344.93" width="10.5" height="20.35" fill="#e0e0e0"/><rect x="42.91" y="344.93" width="10.5" height="20.35" fill="#e0e0e0"/><rect x="54.88" y="344.93" width="10.5" height="20.35" fill="#e0e0e0"/><rect x="66.85" y="344.93" width="10.5" height="20.35" fill="#e0e0e0"/><rect x="78.82" y="344.93" width="10.5" height="20.35" fill="#b0b0b0"/><rect x="90.79" y="344.93" width="10.5" height="20.35" fill="#e0e0e0"/><rect x="102.76" y="344.93" width="10.5" height="20.35" fill="#e0e0e0"/><rect x="114.73" y="344.93" width="10.5" height="20.35" fill="#e0e0e0"/><rect x="126.70" y="344.93" width="10.5" height="20.35" fill="#b0b0b0"/><rect x="138.67" y="344.93" width="10.5" height="20.35" fill="#e0e0e0"/><rect x="150.64" y="344.93" width="10.5" height="20.35" fill="#e0e0e0"/><rect x="162.61" y="344.93" width="10.5" height="20.35" fill="#e0e0e0"/><rect x="174.58" y="344.93" width="10.5" height="20.35" fill="#b0b0b0"/><rect x="186.55" y="344.93" width="10.5" height="20.35" fill="#e0e0e0"/><rect x="198.52" y="344.93" width="10.5" height="20.35" fill="#e0e0e0"/><rect x="210.49" y="344.93" width="10.5" height="20.35" fill="#e0e0e0"/><rect x="222.46" y="344.93" width="10.5" height="20.35" fill="#e0e0e0"/><rect x="234.43" y="344.93" width="10.5" height="20.35" fill="#b0b0b0"/><rect x="246.40" y="344.93" width="10.5" height="20.35" fill="#e0e0e0"/><rect x="258.37" y="344.93" width="10.5" height="20.35" fill="#e0e0e0"/><rect x="270.34" y="344.93" width="10.5" height="20.35" fill="#e0e0e0"/><rect x="282.31" y="344.93" width="10.5" height="20.35" fill="#b0b0b0"/><rect x="294.28" y="344.93" width="10.5" height="20.35" fill="#e0e0e0"/><rect x="306.25" y="344.93" width="10.5" height="20.35" fill="#e0e0e0"/><rect x="318.22" y="344.93" width="10.5" height="20.35" fill="#e0e0e0"/><rect x="330.19" y="344.93" width="10.5" height="20.35" fill="#b0b0b0"/><rect x="342.16" y="344.93" width="10.5" height="20.35" fill="#e0e0e0"/><rect x="354.13" y="344.93" width="10.5" height="20.35" fill="#e0e0e0"/><rect x="366.10" y="344.93" width="10.5" height="20.35" fill="#e0e0e0"/><rect x="378.07" y="344.93" width="10.5" height="20.35" fill="#e0e0e0"/><rect x="390.04" y="344.93" width="10.5" height="20.35" fill="#e0e0e0"/><rect x="402.01" y="344.93" width="10.5" height="20.35" fill="#e0e0e0"/><rect x="413.98" y="344.93" width="10.5" height="20.35" fill="#e0e0e0"/><rect x="425.95" y="344.93" width="10.5" height="20.35" fill="#e0e0e0"/><rect x="437.92" y="344.93" width="10.5" height="20.35" fill="#b0b0b0"/><rect x="449.89" y="344.93" width="10.5" height="20.35" fill="#e0e0e0"/><rect x="461.86" y="344.93" width="10.5" height="20.35" fill="#e0e0e0"/><rect x="7.00" y="366.70" width="10.5" height="20.35" fill="#e0e0e0"/><rect x="18.97" y="366.70" width="10.5" height="20.35" fill="#e0e0e0"/><rect x="30.94" y="366.70" width="10.5" height="20.35" fill="#e0e0e0"/><rect x="42.91" y="366.70" width="10.5" height="20.35" fill="#e0e0e0"/><rect x="54.88" y="366.70" width="10.5" height="20.35" fill="#e0e0e0"/><rect x="66.85" y="366.70" width="10.5" height="20.35" fill="#b0b0b0"/><rect x="78.82" y="366.70" width="10.5" height="20.35" fill="#e0e0e0"/><rect x="90.79" y="366.70" width="10.5" height="20.35" fill="#e0e0e0"/><rect x="102.76" y="366.70" width="10.5" height="20.35" fill="#e0e0e0"/><rect x="114.73" y="366.70" width="10.5" height="20.35" fill="#e0e0e0"/><rect x="126.70" y="366.70" width="10.5" height="20.35" fill="#b0b0b0"/><rect x="138.67" y="366.70" width="10.5" height="20.35" fill="#e0e0e0"/><rect x="150.64" y="366.70" width="10.5" height="20.35" fill="#e0e0e0"/><rect x="162.61" y="366.70" width="10.5" height="20.35" fill="#e0e0e0"/><rect x="174.58" y="366.70" width="10.5" height="20.35" fill="#b0b0b0"/><rect x="186.55" y="366.70" width="10.5" height="20.35" fill="#e0e0e0"/><rect x="198.52" y="366.70" width="10.5" height="20.35" fill="#e0e0e0"/><rect x="210.49" y="366.70" width="10.5" height="20.35" fill="#e0e0e0"/><rect x="222.46" y="366.70" width="10.5" height="20.35" fill="#b0b0b0"/><rect x="234.43" y="366.70" width="10.5" height="20.35" fill="#e0e0e0"/><rect x="246.40" y="366.70" width="10.5" height="20.35" fill="#e0e0e0"/><rect x="258.37" y="366.70" width="10.5" height="20.35" fill="#e0e0e0"/><rect x="270.34" y="366.70" width="10.5" height="20.35" fill="#b0b0b0"/><rect x="282.31" y="366.70" width="10.5" height="20.35" fill="#e0e0e0"/><rect x="294.28" y="366.70" width="10.5" height="20.35" fill="#e0e0e0"/><rect x="306.25" y="366.70" width="10.5" height="20.35" fill="#e0e0e0"/><rect x="318.22" y="366.70" width="10.5" height="20.35" fill="#e0e0e0"/><rect x="330.19" y="366.70" width="10.5" height="20.35" fill="#b0b0b0"/><rect x="342.16" y="366.70" width="10.5" height="20.35" fill="#e0e0e0"/><rect x="354.13" y="366.70" width="10.5" height="20.35" fill="#e0e0e0"/><rect x="366.10" y="366.70" width="10.5" height="20.35" fill="#e0e0e0"/><rect x="378.07" y="366.70" width="10.5" height="20.35" fill="#b0b0b0"/><rect x="390.04" y="366.70" width="10.5" height="20.35" fill="#e0e0e0"/><rect x="402.01" y="366.70" width="10.5" height="20.35" fill="#e0e0e0"/><rect x="413.98" y="366.70" width="10.5" height="20.35" fill="#e0e0e0"/><rect x="425.95" y="366.70" width="10.5" height="20.35" fill="#b0b0b0"/><rect x="437.92" y="366.70" width="10.5" height="20.35" fill="#e0e0e0"/><rect x="449.89" y="366.70" width="10.5" height="20.35" fill="#e0e0e0"/><rect x="461.86" y="366.70" width="10.5" height="20.35" fill="#e0e0e0"/><rect x="7.00" y="388.47" width="10.5" height="20.35" fill="#e0e0e0"/><rect x="18.97" y="388.47" width="10.5" height="20.35" fill="#e0e0e0"/><rect x="30.94" y="388.47" width="10.5" height="20.35" fill="#e0e0e0"/><rect x="42.91" y="388.47" width="10.5" height="20.35" fill="#b0b0b0"/><rect x="54.88" y="388.47" width="10.5" height="20.35" fill="#e0e0e0"/><rect x="66.85" y="388.47" width="10.5" height="20.35" fill="#e0e0e0"/><rect x="78.82" y="388.47" width="10.5" height="20.35" fill="#e0e0e0"/><rect x="90.79" y="388.47" width="10.5" height="20.35" fill="#e0e0e0"/><rect x="102.76" y="388.47" width="10.5" height="20.35" fill="#e0e0e0"/><rect x="114.73" y="388.47" width="10.5" height="20.35" fill="#b0b0b0"/><rect x="126.70" y="388.47" width="10.5" height="20.35" fill="#e0e0e0"/><rect x="138.67" y="388.47" width="10.5" height="20.35" fill="#e0e0e0"/><rect x="150.64" y="388.47" width="10.5" height="20.35" fill="#e0e0e0"/><rect x="162.61" y="388.47" width="10.5" height="20.35" fill="#b0b0b0"/><rect x="174.58" y="388.47" width="10.5" height="20.35" fill="#e0e0e0"/><rect x="186.55" y="388.47" width="10.5" height="20.35" fill="#e0e0e0"/><rect x="198.52" y="388.47" width="10.5" height="20.35" fill="#e0e0e0"/><rect x="210.49" y="388.47" width="10.5" height="20.35" fill="#e0e0e0"/><rect x="222.46" y="388.47" width="10.5" height="20.35" fill="#e0e0e0"/><rect x="234.43" y="388.47" width="10.5" height="20.35" fill="#e0e0e0"/><rect x="246.40" y="388.47" width="10.5" height="20.35" fill="#e0e0e0"/><rect x="258.37" y="388.47" width="10.5" height="20.35" fill="#e0e0e0"/><rect x="270.34" y="388.47" width="10.5" height="20.35" fill="#b0b0b0"/><rect x="282.31" y="388.47" width="10.5" height="20.35" fill="#e0e0e0"/><rect x="294.28" y="388.47" width="10.5" height="20.35" fill="#e0e0e0"/><rect x="306.25" y="388.47" width="10.5" height="20.35" fill="#e0e0e0"/><rect x="318.22" y="388.47" width="10.5" height="20.35" fill="#b0b0b0"/><rect x="330.19" y="388.47" width="10.5" height="20.35" fill="#e0e0e0"/><rect x="342.16" y="388.47" width="10.5" height="20.35" fill="#e0e0e0"/><rect x="354.13" y="388.47" width="10.5" height="20.35" fill="#e0e0e0"/><rect x="366.10" y="388.47" width="10.5" height="20.35" fill="#e0e0e0"/><rect x="378.07" y="388.47" width="10.5" height="20.35" fill="#e0e0e0"/><rect x="390.04" y="388.47" width="10.5" height="20.35" fill="#e0e0e0"/><rect x="402.01" y="388.47" width="10.5" height="20.35" fill="#e0e0e0"/><rect x="413.98" y="388.47" width="10.5" height="20.35" fill="#b0b0b0"/><rect x="425.95" y="388.47" width="10.5" height="20.35" fill="#e0e0e0"/><rect x="437.92" y="388.47" width="10.5" height="20.35" fill="#e0e0e0"/><rect x="449.89" y="388.47" width="10.5" height="20.35" fill="#e0e0e0"/><rect x="461.86" y="388.47" width="10.5" height="20.35" fill="#e0e0e0"/><rect x="7.00" y="410.24" width="10.5" height="20.35" fill="#e0e0e0"/><rect x="18.97" y="410.24" width="10.5" height="20.35" fill="#e0e0e0"/><rect x="30.94" y="410.24" width="10.5" height="20.35" fill="#e0e0e0"/><rect x="42.91" y="410.24" width="10.5" height="20.35" fill="#e0e0e0"/><rect x="54.88" y="410.24" width="10.5" height="20.35" fill="#e0e0e0"/><rect x="66.85" y="410.24" width="10.5" height="20.35" fill="#e0e0e0"/><rect x="78.82" y="410.24" width="10.5" height="20.35" fill="#e0e0e0"/><rect x="90.79" y="410.24" width="10.5" height="20.35" fill="#e0e0e0"/><rect x="102.76" y="410.24" width="10.5" height="20.35" fill="#e0e0e0"/><rect x="114.73" y="410.24" width="10.5" height="20.35" fill="#b0b0b0"/><rect x="126.70" y="410.24" width="10.5" height="20.35" fill="#e0e0e0"/><rect x="138.67" y="410.24" width="10.5" height="20.35" fill="#e0e0e0"/><rect x="150.64" y="410.24" width="10.5" height="20.35" fill="#e0e0e0"/><rect x="162.61" y="410.24" width="10.5" height="20.35" fill="#b0b0b0"/><rect x="174.58" y="410.24" width="10.5" height="20.35" fill="#e0e0e0"/><rect x="186.55" y="410.24" width="10.5" height="20.35" fill="#e0e0e0"/><rect x="198.52" y="410.24" width="10.5" height="20.35" fill="#e0e0e0"/><rect x="210.49" y="410.24" width="10.5" height="20.35" fill="#e0e0e0"/><rect x="222.46" y="410.24" width="10.5" height="20.35" fill="#b0b0b0"/><rect x="234.43" y="410.24" width="10.5" height="20.35" fill="#e0e0e0"/><rect x="246.40" y="410.24" width="10.5" height="20.35" fill="#e0e0e0"/><rect x="258.37" y="410.24" width="10.5" height="20.35" fill="#e0e0e0"/><rect x="270.34" y="410.24" width="10.5" height="20.35" fill="#b0b0b0"/><rect x="282.31" y="410.24" width="10.5" height="20.35" fill="#e0e0e0"/><rect x="294.28" y="410.24" width="10.5" height="20.35" fill="#e0e0e0"/><rect x="306.25" y="410.24" width="10.5" height="20.35" fill="#e0e0e0"/><rect x="318.22" y="410.24" width="10.5" height="20.35" fill="#e0e0e0"/><rect x="330.19" y="410.24" width="10.5" height="20.35" fill="#b0b0b0"/><rect x="342.16" y="410.24" width="10.5" height="20.35" fill="#e0e0e0"/><rect x="354.13" y="410.24" width="10.5" height="20.35" fill="#e0e0e0"/><rect x="366.10" y="410.24" width="10.5" height="20.35" fill="#e0e0e0"/><rect x="378.07" y="410.24" width="10.5" height="20.35" fill="#e0e0e0"/><rect x="390.04" y="410.24" width="10.5" height="20.35" fill="#e0e0e0"/><rect x="402.01" y="410.24" width="10.5" height="20.35" fill="#e0e0e0"/><rect x="413.98" y="410.24" width="10.5" height="20.35" fill="#e0e0e0"/><rect x="425.95" y="410.24" width="10.5" height="20.35" fill="#e0e0e0"/><rect x="437.92" y="410.24" width="10.5" height="20.35" fill="#b0b0b0"/><rect x="449.89" y="410.24" width="10.5" height="20.35" fill="#e0e0e0"/><rect x="461.86" y="410.24" width="10.5" height="20.35" fill="#e0e0e0"/><rect x="7.00" y="432.01" width="10.5" height="20.35" fill="#e0e0e0"/><rect x="18.97" y="432.01" width="10.5" height="20.35" fill="#e0e0e0"/><rect x="30.94" y="432.01" width="10.5" height="20.35" fill="#e0e0e0"/><rect x="42.91" y="432.01" width="10.5" height="20.35" fill="#e0e0e0"/><rect x="54.88" y="432.01" width="10.5" height="20.35" fill="#e0e0e0"/><rect x="66.85" y="432.01" width="10.5" height="20.35" fill="#e0e0e0"/><rect x="78.82" y="432.01" width="10.5" height="20.35" fill="#e0e0e0"/><rect x="90.79" y="432.01" width="10.5" height="20.35" fill="#e0e0e0"/><rect x="102.76" y="432.01" width="10.5" height="20.35" fill="#e0e0e0"/><rect x="114.73" y="432.01" width="10.5" height="20.35" fill="#e0e0e0"/><rect x="126.70" y="432.01" width="10.5" height="20.35" fill="#b0b0b0"/><rect x="138.67" y="432.01" width="10.5" height="20.35" fill="#e0e0e0"/><rect x="150.64" y="432.01" width="10.5" height="20.35" fill="#e0e0e0"/><rect x="162.61" y="432.01" width="10.5" height="20.35" fill="#e0e0e0"/><rect x="174.58" y="432.01" width="10.5" height="20.35" fill="#e0e0e0"/><rect x="186.55" y="432.01" width="10.5" height="20.35" fill="#b0b0b0"/><rect x="198.52" y="432.01" width="10.5" height="20.35" fill="#e0e0e0"/><rect x="210.49" y="432.01" width="10.5" height="20.35" fill="#e0e0e0"/><rect x="222.46" y="432.01" width="10.5" height="20.35" fill="#e0e0e0"/><rect x="234.43" y="432.01" width="10.5" height="20.35" fill="#e0e0e0"/><rect x="246.40" y="432.01" width="10.5" height="20.35" fill="#e0e0e0"/><rect x="258.37" y="432.01" width="10.5" height="20.35" fill="#e0e0e0"/><rect x="270.34" y="432.01" width="10.5" height="20.35" fill="#e0e0e0"/><rect x="282.31" y="432.01" width="10.5" height="20.35" fill="#e0e0e0"/><rect x="294.28" y="432.01" width="10.5" height="20.35" fill="#b0b0b0"/><rect x="306.25" y="432.01" width="10.5" height="20.35" fill="#e0e0e0"/><rect x="318.22" y="432.01" width="10.5" height="20.35" fill="#e0e0e0"/><rect x="330.19" y="432.01" width="10.5" height="20.35" fill="#e0e0e0"/><rect x="342.16" y="432.01" width="10.5" height="20.35" fill="#e0e0e0"/><rect x="354.13" y="432.01" width="10.5" height="20.35" fill="#e0e0e0"/><rect x="366.10" y="432.01" width="10.5" height="20.35" fill="#e0e0e0"/><rect x="378.07" y="432.01" width="10.5" height="20.35" fill="#e0e0e0"/><rect x="390.04" y="432.01" width="10.5" height="20.35" fill="#e0e0e0"/><rect x="402.01" y="432.01" width="10.5" height="20.35" fill="#b0b0b0"/><rect x="413.98" y="432.01" width="10.5" height="20.35" fill="#e0e0e0"/><rect x="425.95" y="432.01" width="10.5" height="20.35" fill="#e0e0e0"/><rect x="437.92" y="432.01" width="10.5" height="20.35" fill="#e0e0e0"/><rect x="449.89" y="432.01" width="10.5" height="20.35" fill="#e0e0e0"/><rect x="461.86" y="432.01" width="10.5" height="20.35" fill="#b0b0b0"/><rect x="7.00" y="453.78" width="10.5" height="20.35" fill="#e0e0e0"/><rect x="18.97" y="453.78" width="10.5" height="20.35" fill="#e0e0e0"/><rect x="30.94" y="453.78" width="10.5" height="20.35" fill="#e0e0e0"/><rect x="42.91" y="453.78" width="10.5" height="20.35" fill="#e0e0e0"/><rect x="54.88" y="453.78" width="10.5" height="20.35" fill="#e0e0e0"/><rect x="66.85" y="453.78" width="10.5" height="20.35" fill="#e0e0e0"/><rect x="78.82" y="453.78" width="10.5" height="20.35" fill="#e0e0e0"/><rect x="90.79" y="453.78" width="10.5" height="20.35" fill="#e0e0e0"/><rect x="102.76" y="453.78" width="10.5" height="20.35" fill="#e0e0e0"/><rect x="114.73" y="453.78" width="10.5" height="20.35" fill="#e0e0e0"/><rect x="126.70" y="453.78" width="10.5" height="20.35" fill="#e0e0e0"/><rect x="138.67" y="453.78" width="10.5" height="20.35" fill="#e0e0e0"/><rect x="150.64" y="453.78" width="10.5" height="20.35" fill="#b0b0b0"/><rect x="162.61" y="453.78" width="10.5" height="20.35" fill="#e0e0e0"/><rect x="174.58" y="453.78" width="10.5" height="20.35" fill="#e0e0e0"/><rect x="186.55" y="453.78" width="10.5" height="20.35" fill="#e0e0e0"/><rect x="198.52" y="453.78" width="10.5" height="20.35" fill="#e0e0e0"/><rect x="210.49" y="453.78" width="10.5" height="20.35" fill="#e0e0e0"/><rect x="222.46" y="453.78" width="10.5" height="20.35" fill="#e0e0e0"/><rect x="234.43" y="453.78" width="10.5" height="20.35" fill="#e0e0e0"/><rect x="246.40" y="453.78" width="10.5" height="20.35" fill="#e0e0e0"/><rect x="258.37" y="453.78" width="10.5" height="20.35" fill="#b0b0b0"/><rect x="270.34" y="453.78" width="10.5" height="20.35" fill="#e0e0e0"/><rect x="282.31" y="453.78" width="10.5" height="20.35" fill="#e0e0e0"/><rect x="294.28" y="453.78" width="10.5" height="20.35" fill="#e0e0e0"/><rect x="306.25" y="453.78" width="10.5" height="20.35" fill="#e0e0e0"/><rect x="318.22" y="453.78" width="10.5" height="20.35" fill="#b0b0b0"/><rect x="330.19" y="453.78" width="10.5" height="20.35" fill="#e0e0e0"/><rect x="342.16" y="453.78" width="10.5" height="20.35" fill="#e0e0e0"/><rect x="354.13" y="453.78" width="10.5" height="20.35" fill="#e0e0e0"/><rect x="366.10" y="453.78" width="10.5" height="20.35" fill="#b0b0b0"/><rect x="378.07" y="453.78" width="10.5" height="20.35" fill="#e0e0e0"/><rect x="390.04" y="453.78" width="10.5" height="20.35" fill="#e0e0e0"/><rect x="402.01" y="453.78" width="10.5" height="20.35" fill="#e0e0e0"/><rect x="413.98" y="453.78" width="10.5" height="20.35" fill="#e0e0e0"/><rect x="425.95" y="453.78" width="10.5" height="20.35" fill="#b0b0b0"/><rect x="437.92" y="453.78" width="10.5" height="20.35" fill="#e0e0e0"/><rect x="449.89" y="453.78" width="10.5" height="20.35" fill="#e0e0e0"/><rect x="461.86" y="453.78" width="10.5" height="20.35" fill="#e0e0e0"/><rect x="7.00" y="475.55" width="10.5" height="20.35" fill="#e0e0e0"/><rect x="18.97" y="475.55" width="10.5" height="20.35" fill="#e0e0e0"/><rect x="30.94" y="475.55" width="10.5" height="20.35" fill="#e0e0e0"/><rect x="42.91" y="475.55" width="10.5" height="20.35" fill="#e0e0e0"/><rect x="54.88" y="475.55" width="10.5" height="20.35" fill="#e0e0e0"/><rect x="66.85" y="475.55" width="10.5" height="20.35" fill="#e0e0e0"/><rect x="78.82" y="475.55" width="10.5" height="20.35" fill="#e0e0e0"/><rect x="90.79" y="475.55" width="10.5" height="20.35" fill="#e0e0e0"/><rect x="102.76" y="475.55" width="10.5" height="20.35" fill="#e0e0e0"/><rect x="114.73" y="475.55" width="10.5" height="20.35" fill="#e0e0e0"/><rect x="126.70" y="475.55" width="10.5" height="20.35" fill="#e0e0e0"/><rect x="138.67" y="475.55" width="10.5" height="20.35" fill="#e0e0e0"/><rect x="150.64" y="475.55" width="10.5" height="20.35" fill="#e0e0e0"/><rect x="162.61" y="475.55" width="10.5" height="20.35" fill="#e0e0e0"/><rect x="174.58" y="475.55" width="10.5" height="20.35" fill="#b0b0b0"/><rect x="186.55" y="475.55" width="10.5" height="20.35" fill="#e0e0e0"/><rect x="198.52" y="475.55" width="10.5" height="20.35" fill="#e0e0e0"/><rect x="210.49" y="475.55" width="10.5" height="20.35" fill="#e0e0e0"/><rect x="222.46" y="475.55" width="10.5" height="20.35" fill="#e0e0e0"/><rect x="234.43" y="475.55" width="10.5" height="20.35" fill="#b0b0b0"/><rect x="246.40" y="475.55" width="10.5" height="20.35" fill="#e0e0e0"/><rect x="258.37" y="475.55" width="10.5" height="20.35" fill="#e0e0e0"/><rect x="270.34" y="475.55" width="10.5" height="20.35" fill="#e0e0e0"/><rect x="282.31" y="475.55" width="10.5" height="20.35" fill="#b0b0b0"/><rect x="294.28" y="475.55" width="10.5" height="20.35" fill="#e0e0e0"/><rect x="306.25" y="475.55" width="10.5" height="20.35" fill="#e0e0e0"/><rect x="318.22" y="475.55" width="10.5" height="20.35" fill="#e0e0e0"/><rect x="330.19" y="475.55" width="10.5" height="20.35" fill="#e0e0e0"/><rect x="342.16" y="475.55" width="10.5" height="20.35" fill="#e0e0e0"/><rect x="354.13" y="475.55" width="10.5" height="20.35" fill="#e0e0e0"/><rect x="366.10" y="475.55" width="10.5" height="20.35" fill="#e0e0e0"/><rect x="378.07" y="475.55" width="10.5" height="20.35" fill="#e0e0e0"/><rect x="390.04" y="475.55" width="10.5" height="20.35" fill="#b0b0b0"/><rect x="402.01" y="475.55" width="10.5" height="20.35" fill="#e0e0e0"/><rect x="413.98" y="475.55" width="10.5" height="20.35" fill="#e0e0e0"/><rect x="425.95" y="475.55" width="10.5" height="20.35" fill="#e0e0e0"/><rect x="437.92" y="475.55" width="10.5" height="20.35" fill="#e0e0e0"/><rect x="449.89" y="475.55" width="10.5" height="20.35" fill="#e0e0e0"/><rect x="461.86" y="475.55" width="10.5" height="20.35" fill="#e0e0e0"/><rect x="7.00" y="497.32" width="10.5" height="20.35" fill="#e0e0e0"/><rect x="18.97" y="497.32" width="10.5" height="20.35" fill="#e0e0e0"/><rect x="30.94" y="497.32" width="10.5" height="20.35" fill="#e0e0e0"/><rect x="42.91" y="497.32" width="10.5" height="20.35" fill="#e0e0e0"/><rect x="54.88" y="497.32" width="10.5" height="20.35" fill="#e0e0e0"/><rect x="66.85" y="497.32" width="10.5" height="20.35" fill="#e0e0e0"/><rect x="78.82" y="497.32" width="10.5" height="20.35" fill="#e0e0e0"/><rect x="90.79" y="497.32" width="10.5" height="20.35" fill="#b0b0b0"/><rect x="102.76" y="497.32" width="10.5" height="20.35" fill="#e0e0e0"/><rect x="114.73" y="497.32" width="10.5" height="20.35" fill="#e0e0e0"/><rect x="126.70" y="497.32" width="10.5" height="20.35" fill="#e0e0e0"/><rect x="138.67" y="497.32" width="10.5" height="20.35" fill="#b0b0b0"/><rect x="150.64" y="497.32" width="10.5" height="20.35" fill="#e0e0e0"/><rect x="162.61" y="497.32" width="10.5" height="20.35" fill="#e0e0e0"/><rect x="174.58" y="497.32" width="10.5" height="20.35" fill="#e0e0e0"/><rect x="186.55" y="497.32" width="10.5" height="20.35" fill="#e0e0e0"/><rect x="198.52" y="497.32" width="10.5" height="20.35" fill="#b0b0b0"/><rect x="210.49" y="497.32" width="10.5" height="20.35" fill="#e0e0e0"/><rect x="222.46" y="497.32" width="10.5" height="20.35" fill="#e0e0e0"/><rect x="234.43" y="497.32" width="10.5" height="20.35" fill="#e0e0e0"/><rect x="246.40" y="497.32" width="10.5" height="20.35" fill="#b0b0b0"/><rect x="258.37" y="497.32" width="10.5" height="20.35" fill="#e0e0e0"/><rect x="270.34" y="497.32" width="10.5" height="20.35" fill="#e0e0e0"/><rect x="282.31" y="497.32" width="10.5" height="20.35" fill="#e0e0e0"/><rect x="294.28" y="497.32" width="10.5" height="20.35" fill="#e0e0e0"/><rect x="306.25" y="497.32" width="10.5" height="20.35" fill="#b0b0b0"/><rect x="318.22" y="497.32" width="10.5" height="20.35" fill="#e0e0e0"/><rect x="330.19" y="497.32" width="10.5" height="20.35" fill="#e0e0e0"/><rect x="342.16" y="497.32" width="10.5" height="20.35" fill="#e0e0e0"/><rect x="354.13" y="497.32" width="10.5" height="20.35" fill="#e0e0e0"/><rect x="366.10" y="497.32" width="10.5" height="20.35" fill="#e0e0e0"/><rect x="378.07" y="497.32" width="10.5" height="20.35" fill="#e0e0e0"/><rect x="390.04" y="497.32" width="10.5" height="20.35" fill="#e0e0e0"/><rect x="402.01" y="497.32" width="10.5" height="20.35" fill="#e0e0e0"/><rect x="413.98" y="497.32" width="10.5" height="20.35" fill="#b0b0b0"/><rect x="425.95" y="497.32" width="10.5" height="20.35" fill="#e0e0e0"/><rect x="437.92" y="497.32" width="10.5" height="20.35" fill="#e0e0e0"/><rect x="449.89" y="497.32" width="10.5" height="20.35" fill="#e0e0e0"/><rect x="461.86" y="497.32" width="10.5" height="20.35" fill="#b0b0b0"/><rect x="7.00" y="519.09" width="10.5" height="20.35" fill="#e0e0e0"/><rect x="18.97" y="519.09" width="10.5" height="20.35" fill="#b0b0b0"/><rect x="30.94" y="519.09" width="10.5" height="20.35" fill="#e0e0e0"/><rect x="42.91" y="519.09" width="10.5" height="20.35" fill="#e0e0e0"/><rect x="54.88" y="519.09" width="10.5" height="20.35" fill="#e0e0e0"/><rect x="66.85" y="519.09" width="10.5" height="20.35" fill="#e0e0e0"/><rect x="78.82" y="519.09" width="10.5" height="20.35" fill="#e0e0e0"/><rect x="90.79" y="519.09" width="10.5" height="20.35" fill="#e0e0e0"/><rect x="102.76" y="519.09" width="10.5" height="20.35" fill="#b0b0b0"/><rect x="114.73" y="519.09" width="10.5" height="20.35" fill="#e0e0e0"/><rect x="126.70" y="519.09" width="10.5" height="20.35" fill="#e0e0e0"/><rect x="138.67" y="519.09" width="10.5" height="20.35" fill="#e0e0e0"/><rect x="150.64" y="519.09" width="10.5" height="20.35" fill="#e0e0e0"/><rect x="162.61" y="519.09" width="10.5" height="20.35" fill="#b0b0b0"/><rect x="174.58" y="519.09" width="10.5" height="20.35" fill="#e0e0e0"/><rect x="186.55" y="519.09" width="10.5" height="20.35" fill="#e0e0e0"/><rect x="198.52" y="519.09" width="10.5" height="20.35" fill="#e0e0e0"/><rect x="210.49" y="519.09" width="10.5" height="20.35" fill="#e0e0e0"/><rect x="222.46" y="519.09" width="10.5" height="20.35" fill="#b0b0b0"/><rect x="234.43" y="519.09" width="10.5" height="20.35" fill="#e0e0e0"/><rect x="246.40" y="519.09" width="10.5" height="20.35" fill="#e0e0e0"/><rect x="258.37" y="519.09" width="10.5" height="20.35" fill="#e0e0e0"/><rect x="270.34" y="519.09" width="10.5" height="20.35" fill="#b0b0b0"/><rect x="282.31" y="519.09" width="10.5" height="20.35" fill="#e0e0e0"/><rect x="294.28" y="519.09" width="10.5" height="20.35" fill="#e0e0e0"/><rect x="306.25" y="519.09" width="10.5" height="20.35" fill="#e0e0e0"/><rect x="318.22" y="519.09" width="10.5" height="20.35" fill="#e0e0e0"/><rect x="330.19" y="519.09" width="10.5" height="20.35" fill="#e0e0e0"/><rect x="342.16" y="519.09" width="10.5" height="20.35" fill="#e0e0e0"/><rect x="354.13" y="519.09" width="10.5" height="20.35" fill="#e0e0e0"/><rect x="366.10" y="519.09" width="10.5" height="20.35" fill="#e0e0e0"/><rect x="378.07" y="519.09" width="10.5" height="20.35" fill="#b0b0b0"/><rect x="390.04" y="519.09" width="10.5" height="20.35" fill="#e0e0e0"/><rect x="402.01" y="519.09" width="10.5" height="20.35" fill="#e0e0e0"/><rect x="413.98" y="519.09" width="10.5" height="20.35" fill="#e0e0e0"/><rect x="425.95" y="519.09" width="10.5" height="20.35" fill="#e0e0e0"/><rect x="437.92" y="519.09" width="10.5" height="20.35" fill="#b0b0b0"/><rect x="449.89" y="519.09" width="10.5" height="20.35" fill="#e0e0e0"/><rect x="461.86" y="519.09" width="10.5" height="20.35" fill="#e0e0e0"/><rect x="7.00" y="540.86" width="10.5" height="20.35" fill="#e0e0e0"/><rect x="18.97" y="540.86" width="10.5" height="20.35" fill="#e0e0e0"/><rect x="30.94" y="540.86" width="10.5" height="20.35" fill="#e0e0e0"/><rect x="42.91" y="540.86" width="10.5" height="20.35" fill="#e0e0e0"/><rect x="54.88" y="540.86" width="10.5" height="20.35" fill="#e0e0e0"/><rect x="66.85" y="540.86" width="10.5" height="20.35" fill="#b0b0b0"/><rect x="78.82" y="540.86" width="10.5" height="20.35" fill="#e0e0e0"/><rect x="90.79" y="540.86" width="10.5" height="20.35" fill="#e0e0e0"/><rect x="102.76" y="540.86" width="10.5" height="20.35" fill="#e0e0e0"/><rect x="114.73" y="540.86" width="10.5" height="20.35" fill="#e0e0e0"/><rect x="126.70" y="540.86" width="10.5" height="20.35" fill="#b0b0b0"/><rect x="138.67" y="540.86" width="10.5" height="20.35" fill="#e0e0e0"/><rect x="150.64" y="540.86" width="10.5" height="20.35" fill="#e0e0e0"/><rect x="162.61" y="540.86" width="10.5" height="20.35" fill="#e0e0e0"/><rect x="174.58" y="540.86" width="10.5" height="20.35" fill="#e0e0e0"/><rect x="186.55" y="540.86" width="10.5" height="20.35" fill="#b0b0b0"/><rect x="198.52" y="540.86" width="10.5" height="20.35" fill="#e0e0e0"/><rect x="210.49" y="540.86" width="10.5" height="20.35" fill="#e0e0e0"/><rect x="222.46" y="540.86" width="10.5" height="20.35" fill="#e0e0e0"/><rect x="234.43" y="540.86" width="10.5" height="20.35" fill="#b0b0b0"/><rect x="246.40" y="540.86" width="10.5" height="20.35" fill="#e0e0e0"/><rect x="258.37" y="540.86" width="10.5" height="20.35" fill="#e0e0e0"/><rect x="270.34" y="540.86" width="10.5" height="20.35" fill="#e0e0e0"/><rect x="282.31" y="540.86" width="10.5" height="20.35" fill="#e0e0e0"/><rect x="294.28" y="540.86" width="10.5" height="20.35" fill="#b0b0b0"/><rect x="306.25" y="540.86" width="10.5" height="20.35" fill="#e0e0e0"/><rect x="318.22" y="540.86" width="10.5" height="20.35" fill="#e0e0e0"/><rect x="330.19" y="540.86" width="10.5" height="20.35" fill="#e0e0e0"/><rect x="342.16" y="540.86" width="10.5" height="20.35" fill="#b0b0b0"/><rect x="354.13" y="540.86" width="10.5" height="20.35" fill="#e0e0e0"/><rect x="366.10" y="540.86" width="10.5" height="20.35" fill="#e0e0e0"/><rect x="378.07" y="540.86" width="10.5" height="20.35" fill="#e0e0e0"/><rect x="390.04" y="540.86" width="10.5" height="20.35" fill="#e0e0e0"/><rect x="402.01" y="540.86" width="10.5" height="20.35" fill="#b0b0b0"/><rect x="413.98" y="540.86" width="10.5" height="20.35" fill="#e0e0e0"/><rect x="425.95" y="540.86" width="10.5" height="20.35" fill="#e0e0e0"/><rect x="437.92" y="540.86" width="10.5" height="20.35" fill="#e0e0e0"/><rect x="449.89" y="540.86" width="10.5" height="20.35" fill="#b0b0b0"/><rect x="461.86" y="540.86" width="10.5" height="20.35" fill="#e0e0e0"/><rect x="7.00" y="562.63" width="10.5" height="20.35" fill="#e0e0e0"/><rect x="18.97" y="562.63" width="10.5" height="20.35" fill="#e0e0e0"/><rect x="30.94" y="562.63" width="10.5" height="20.35" fill="#e0e0e0"/><rect x="42.91" y="562.63" width="10.5" height="20.35" fill="#e0e0e0"/><rect x="54.88" y="562.63" width="10.5" height="20.35" fill="#e0e0e0"/><rect x="66.85" y="562.63" width="10.5" height="20.35" fill="#e0e0e0"/><rect x="78.82" y="562.63" width="10.5" height="20.35" fill="#e0e0e0"/><rect x="90.79" y="562.63" width="10.5" height="20.35" fill="#e0e0e0"/><rect x="102.76" y="562.63" width="10.5" height="20.35" fill="#e0e0e0"/><rect x="114.73" y="562.63" width="10.5" height="20.35" fill="#e0e0e0"/><rect x="126.70" y="562.63" width="10.5" height="20.35" fill="#e0e0e0"/><rect x="138.67" y="562.63" width="10.5" height="20.35" fill="#e0e0e0"/><rect x="150.64" y="562.63" width="10.5" height="20.35" fill="#b0b0b0"/><rect x="162.61" y="562.63" width="10.5" height="20.35" fill="#e0e0e0"/><rect x="174.58" y="562.63" width="10.5" height="20.35" fill="#e0e0e0"/><rect x="186.55" y="562.63" width="10.5" height="20.35" fill="#e0e0e0"/><rect x="198.52" y="562.63" width="10.5" height="20.35" fill="#e0e0e0"/><rect x="210.49" y="562.63" width="10.5" height="20.35" fill="#e0e0e0"/><rect x="222.46" y="562.63" width="10.5" height="20.35" fill="#e0e0e0"/><rect x="234.43" y="562.63" width="10.5" height="20.35" fill="#e0e0e0"/><rect x="246.40" y="562.63" width="10.5" height="20.35" fill="#e0e0e0"/><rect x="258.37" y="562.63" width="10.5" height="20.35" fill="#b0b0b0"/><rect x="270.34" y="562.63" width="10.5" height="20.35" fill="#e0e0e0"/><rect x="282.31" y="562.63" width="10.5" height="20.35" fill="#e0e0e0"/><rect x="294.28" y="562.63" width="10.5" height="20.35" fill="#e0e0e0"/><rect x="306.25" y="562.63" width="10.5" height="20.35" fill="#b0b0b0"/><rect x="318.22" y="562.63" width="10.5" height="20.35" fill="#e0e0e0"/><rect x="330.19" y="562.63" width="10.5" height="20.35" fill="#e0e0e0"/><rect x="342.16" y="562.63" width="10.5" height="20.35" fill="#e0e0e0"/><rect x="354.13" y="562.63" width="10.5" height="20.35" fill="#e0e0e0"/><rect x="366.10" y="562.63" width="10.5" height="20.35" fill="#b0b0b0"/><rect x="378.07" y="562.63" width="10.5" height="20.35" fill="#e0e0e0"/><rect x="390.04" y="562.63" width="10.5" height="20.35" fill="#e0e0e0"/><rect x="402.01" y="562.63" width="10.5" height="20.35" fill="#e0e0e0"/><rect x="413.98" y="562.63" width="10.5" height="20.35" fill="#e0e0e0"/><rect x="425.95" y="562.63" width="10.5" height="20.35" fill="#b0b0b0"/><rect x="437.92" y="562.63" width="10.5" height="20.35" fill="#e0e0e0"/><rect x="449.89" y="562.63" width="10.5" height="20.35" fill="#e0e0e0"/><rect x="461.86" y="562.63" width="10.5" height="20.35" fill="#e0e0e0"/><rect x="7.00" y="584.40" width="10.5" height="20.35" fill="#e0e0e0"/><rect x="18.97" y="584.40" width="10.5" height="20.35" fill="#e0e0e0"/><rect x="30.94" y="584.40" width="10.5" height="20.35" fill="#e0e0e0"/><rect x="42.91" y="584.40" width="10.5" height="20.35" fill="#e0e0e0"/><rect x="54.88" y="584.40" width="10.5" height="20.35" fill="#e0e0e0"/><rect x="66.85" y="584.40" width="10.5" height="20.35" fill="#e0e0e0"/><rect x="78.82" y="584.40" width="10.5" height="20.35" fill="#e0e0e0"/><rect x="90.79" y="584.40" width="10.5" height="20.35" fill="#e0e0e0"/><rect x="102.76" y="584.40" width="10.5" height="20.35" fill="#e0e0e0"/><rect x="114.73" y="584.40" width="10.5" height="20.35" fill="#e0e0e0"/><rect x="126.70" y="584.40" width="10.5" height="20.35" fill="#e0e0e0"/><rect x="138.67" y="584.40" width="10.5" height="20.35" fill="#e0e0e0"/><rect x="150.64" y="584.40" width="10.5" height="20.35" fill="#e0e0e0"/><rect x="162.61" y="584.40" width="10.5" height="20.35" fill="#e0e0e0"/><rect x="174.58" y="584.40" width="10.5" height="20.35" fill="#b0b0b0"/><rect x="186.55" y="584.40" width="10.5" height="20.35" fill="#e0e0e0"/><rect x="198.52" y="584.40" width="10.5" height="20.35" fill="#e0e0e0"/><rect x="210.49" y="584.40" width="10.5" height="20.35" fill="#e0e0e0"/><rect x="222.46" y="584.40" width="10.5" height="20.35" fill="#e0e0e0"/><rect x="234.43" y="584.40" width="10.5" height="20.35" fill="#e0e0e0"/><rect x="246.40" y="584.40" width="10.5" height="20.35" fill="#e0e0e0"/><rect x="258.37" y="584.40" width="10.5" height="20.35" fill="#e0e0e0"/><rect x="270.34" y="584.40" width="10.5" height="20.35" fill="#b0b0b0"/><rect x="282.31" y="584.40" width="10.5" height="20.35" fill="#e0e0e0"/><rect x="294.28" y="584.40" width="10.5" height="20.35" fill="#e0e0e0"/><rect x="306.25" y="584.40" width="10.5" height="20.35" fill="#e0e0e0"/><rect x="318.22" y="584.40" width="10.5" height="20.35" fill="#b0b0b0"/><rect x="330.19" y="584.40" width="10.5" height="20.35" fill="#e0e0e0"/><rect x="342.16" y="584.40" width="10.5" height="20.35" fill="#e0e0e0"/><rect x="354.13" y="584.40" width="10.5" height="20.35" fill="#e0e0e0"/><rect x="366.10" y="584.40" width="10.5" height="20.35" fill="#b0b0b0"/><rect x="378.07" y="584.40" width="10.5" height="20.35" fill="#e0e0e0"/><rect x="390.04" y="584.40" width="10.5" height="20.35" fill="#e0e0e0"/><rect x="402.01" y="584.40" width="10.5" height="20.35" fill="#e0e0e0"/><rect x="413.98" y="584.40" width="10.5" height="20.35" fill="#e0e0e0"/><rect x="425.95" y="584.40" width="10.5" height="20.35" fill="#b0b0b0"/><rect x="437.92" y="584.40" width="10.5" height="20.35" fill="#e0e0e0"/><rect x="449.89" y="584.40" width="10.5" height="20.35" fill="#e0e0e0"/><rect x="461.86" y="584.40" width="10.5" height="20.35" fill="#e0e0e0"/><rect x="7.00" y="606.17" width="10.5" height="20.35" fill="#e0e0e0"/><rect x="18.97" y="606.17" width="10.5" height="20.35" fill="#b0b0b0"/><rect x="30.94" y="606.17" width="10.5" height="20.35" fill="#e0e0e0"/><rect x="42.91" y="606.17" width="10.5" height="20.35" fill="#e0e0e0"/><rect x="54.88" y="606.17" width="10.5" height="20.35" fill="#e0e0e0"/><rect x="66.85" y="606.17" width="10.5" height="20.35" fill="#e0e0e0"/><rect x="78.82" y="606.17" width="10.5" height="20.35" fill="#e0e0e0"/><rect x="90.79" y="606.17" width="10.5" height="20.35" fill="#e0e0e0"/><rect x="102.76" y="606.17" width="10.5" height="20.35" fill="#b0b0b0"/><rect x="114.73" y="606.17" width="10.5" height="20.35" fill="#e0e0e0"/><rect x="126.70" y="606.17" width="10.5" height="20.35" fill="#e0e0e0"/><rect x="138.67" y="606.17" width="10.5" height="20.35" fill="#e0e0e0"/><rect x="150.64" y="606.17" width="10.5" height="20.35" fill="#e0e0e0"/><rect x="162.61" y="606.17" width="10.5" height="20.35" fill="#b0b0b0"/><rect x="174.58" y="606.17" width="10.5" height="20.35" fill="#e0e0e0"/><rect x="186.55" y="606.17" width="10.5" height="20.35" fill="#e0e0e0"/><rect x="198.52" y="606.17" width="10.5" height="20.35" fill="#e0e0e0"/><rect x="210.49" y="606.17" width="10.5" height="20.35" fill="#b0b0b0"/><rect x="222.46" y="606.17" width="10.5" height="20.35" fill="#e0e0e0"/><rect x="234.43" y="606.17" width="10.5" height="20.35" fill="#e0e0e0"/><rect x="246.40" y="606.17" width="10.5" height="20.35" fill="#e0e0e0"/><rect x="258.37" y="606.17" width="10.5" height="20.35" fill="#b0b0b0"/><rect x="270.34" y="606.17" width="10.5" height="20.35" fill="#e0e0e0"/><rect x="282.31" y="606.17" width="10.5" height="20.35" fill="#e0e0e0"/><rect x="294.28" y="606.17" width="10.5" height="20.35" fill="#e0e0e0"/><rect x="306.25" y="606.17" width="10.5" height="20.35" fill="#e0e0e0"/><rect x="318.22" y="606.17" width="10.5" height="20.35" fill="#b0b0b0"/><rect x="330.19" y="606.17" width="10.5" height="20.35" fill="#e0e0e0"/><rect x="342.16" y="606.17" width="10.5" height="20.35" fill="#e0e0e0"/><rect x="354.13" y="606.17" width="10.5" height="20.35" fill="#b0b0b0"/><rect x="366.10" y="606.17" width="10.5" height="20.35" fill="#e0e0e0"/><rect x="378.07" y="606.17" width="10.5" height="20.35" fill="#e0e0e0"/><rect x="390.04" y="606.17" width="10.5" height="20.35" fill="#e0e0e0"/><rect x="402.01" y="606.17" width="10.5" height="20.35" fill="#e0e0e0"/><rect x="413.98" y="606.17" width="10.5" height="20.35" fill="#b0b0b0"/><rect x="425.95" y="606.17" width="10.5" height="20.35" fill="#e0e0e0"/><rect x="437.92" y="606.17" width="10.5" height="20.35" fill="#e0e0e0"/><rect x="449.89" y="606.17" width="10.5" height="20.35" fill="#e0e0e0"/><rect x="461.86" y="606.17" width="10.5" height="20.35" fill="#b0b0b0"/><rect x="7.00" y="627.94" width="10.5" height="20.35" fill="#e0e0e0"/><rect x="18.97" y="627.94" width="10.5" height="20.35" fill="#b0b0b0"/><rect x="30.94" y="627.94" width="10.5" height="20.35" fill="#e0e0e0"/><rect x="42.91" y="627.94" width="10.5" height="20.35" fill="#e0e0e0"/></svg>
<!-- top control panel -->
<div class="abs" style="left:501px;top:146px;width:319px;height:416px;background:#fbfbfb"></div>
<div class="panel" style="left:502px;top:146px;width:315px;height:162px;border:1px solid;border-color:#b2b2b2 #e4e4e4 #c8c8c8 #b2b2b2"></div>
<div class="abs" style="left:502px;top:309.300px;width:315px;height:3.400px;background:#c4c4c4"></div>
<div class="lbl" style="left:512px;top:151px">[ End time ]</div>
<div class="lbl" style="left:583px;top:151px">[Start LBA]</div>
<div class="btn" style="left:644px;top:149.500px;width:21px;height:13.500px;font-size:8.600px;line-height:13px;background:#dedede;border-color:#b0b0b0">CUR</div>
<div class="btn" style="left:669px;top:149.500px;width:21px;height:13.500px;font-size:10px;line-height:13.500px;background:#dedede;border-color:#b0b0b0">0</div>
<div class="lbl" style="left:700px;top:151px">[End LBA]</div>
<div class="btn" style="left:760px;top:149.500px;width:21px;height:13.500px;font-size:8.600px;line-height:13px;background:#dedede;border-color:#b0b0b0">CUR</div>
<div class="btn" style="left:787px;top:149.500px;width:28px;height:13.500px;font-size:10.500px;line-height:13.500px;background:#dedede;border-color:#b0b0b0">MAX</div>
<!-- time spinner -->
<div class="abs" style="left:509px;top:166px;width:65px;height:24px;background:#fff"></div>
<div class="t" style="left:518.500px;top:172px;font-size:14.500px;color:#8a8a96;letter-spacing:-0.109px">2:24</div>
<div class="abs" style="left:555px;top:169px;width:16px;height:19px;background:#f0f0f0;border:1px solid #e0e0e0"></div>
<svg class="abs" style="left:555px;top:169px" width="16" height="19" viewBox="0 0 16 19"><path d="M5 7l3-3.500 3 3.500z" fill="#606060"/><path d="M5 12l3 3.500 3-3.500z" fill="#606060"/><path d="M1 9.500h14" stroke="#e0e0e0"/></svg>
<div class="edit" style="left:582px;top:166px;width:109px;height:23px;font-size:15.500px;line-height:20px;color:#101080;padding-left:4px">0</div>
<div class="edit" style="left:699px;top:166px;width:116px;height:23px;font-size:15.5px;line-height:20px;color:#1414a0;padding-left:4px;letter-spacing:0">312579694</div>
<!-- timer row -->
<div class="chk" style="left:510px;top:198px;background:#f0f0f0;border-color:#c4c4c4;width:13px;height:13px"><svg width="13" height="13" viewBox="0 0 13 13"><path d="M2.500 6.500l2.800 2.800 5-6" fill="none" stroke="#a8a8a8" stroke-width="1.300"/></svg></div>
<div class="t" style="left:530.500px;top:198px;font-size:14px;color:#8a8a92;letter-spacing:-0.493px">Timer</div>
<div class="edit" style="left:582px;top:194px;width:109px;height:23px;font-size:15.500px;line-height:20px;color:#8a8a8a;padding-left:4px;background:#e8e8e8;border-color:#9a9a9a">0</div>
<div class="edit" style="left:699px;top:194px;width:116px;height:23px;font-size:15.5px;line-height:20px;color:#8c1010;padding-left:4px">312579694</div>
<!-- scan buttons -->
<div class="btn" style="left:509px;top:231px;width:49px;height:39px;font-size:13px;font-weight:bold;line-height:37px;color:#2222e0;letter-spacing:-0.395px">Scan</div>
<div class="btn" style="left:560px;top:231px;width:19px;height:39px"></div>
<svg class="abs" style="left:562.500px;top:248.500px" width="10" height="6" viewBox="0 0 10 6"><path d="M1 0.500h8l-4 5z" fill="#111"/></svg>
<div class="btn" style="left:509px;top:278px;width:70px;height:24px;font-size:11.500px;font-weight:bold;line-height:22px;color:#1c1c8c;letter-spacing:-0.113px">QUICK</div>
<!-- diamond -->
<svg class="abs" style="left:585.400px;top:223.900px" width="76" height="76" viewBox="-38 -38 76 76">
<g transform="rotate(45)">
<rect x="-25.500" y="-25.500" width="51" height="51" fill="#484848"/>
<rect x="-24.6" y="-24.6" width="23.6" height="23.6" fill="#dedede"/><path d="M-23.8 -24.6V-1.0M-24.6 -1.8H-1.0" stroke="#fbfbfb" stroke-width="1.600" fill="none"/><path d="M-24.6 -24.0H-1.0M-1.6 -24.6V-1.0" stroke="#6a6a6a" stroke-width="1.200" fill="none"/>
<rect x="1" y="-24.6" width="23.6" height="23.6" fill="#dedede"/><path d="M1.8 -24.6V-1.0M1 -1.8H24.6" stroke="#fbfbfb" stroke-width="1.600" fill="none"/><path d="M1 -24.0H24.6M24.0 -24.6V-1.0" stroke="#6a6a6a" stroke-width="1.200" fill="none"/>
<rect x="-24.6" y="1" width="23.6" height="23.6" fill="#dedede"/><path d="M-23.8 1V24.6M-24.6 23.8H-1.0" stroke="#fbfbfb" stroke-width="1.600" fill="none"/><path d="M-24.6 1.6H-1.0M-1.6 1V24.6" stroke="#6a6a6a" stroke-width="1.200" fill="none"/>
<rect x="1" y="1" width="23.6" height="23.6" fill="#dedede"/><path d="M1.8 1V24.6M1 23.8H24.6" stroke="#fbfbfb" stroke-width="1.600" fill="none"/><path d="M1 1.6H24.6M24.0 1V24.6" stroke="#6a6a6a" stroke-width="1.200" fill="none"/>
</g>
<path d="M-3.800 -18.500l3.800 -7.500 3.800 7.500z" fill="#0a8a0a"/>
<path d="M-3.800 18.500l3.800 6.500 3.800 -6.500z" fill="#0a8a0a"/>
<path d="M-18.500 -3.800l-7 3.800 7 3.800z" fill="#0a8a0a"/>
<path d="M18.500 -3.800l7 3.800 -7 3.800z" fill="#0a8a0a"/>
</svg>
<div class="lbl" style="left:673px;top:222px;letter-spacing:0.031px">[ block size ]</div>
<div class="lbl" style="left:673px;top:237px;letter-spacing:0.260px">[ auto ]</div>
<div class="chk" style="left:715px;top:238px;width:14px;height:13px"><svg width="14" height="13" viewBox="0 0 14 13"><path d="M2.500 6l3 3.200 5.500 -6.500" fill="none" stroke="#444" stroke-width="1.300"/></svg></div>
<div class="lbl" style="left:673px;top:258px;letter-spacing:-0.047px">[ timeout,ms ]</div>
<div class="abs" style="left:741px;top:222px;width:74px;height:26px;background:#fff;border:1px solid #7a7a7a"></div>
<div class="abs" style="left:744px;top:225px;width:50px;height:20px;background:#eeeeee"></div>
<div class="t" style="left:744.500px;top:228px;font-size:13.800px;color:#111;letter-spacing:-0.144px">256</div>
<div class="abs" style="left:741px;top:248px;width:74px;height:26px;background:#fff;border:1px solid #7a7a7a"></div>
<div class="abs" style="left:744px;top:251px;width:50px;height:20px;background:#eeeeee"></div>
<div class="t" style="left:744.500px;top:254px;font-size:13.800px;color:#111;letter-spacing:-0.275px">10000</div>
<svg class="abs" style="left:798px;top:231px" width="12" height="8" viewBox="0 0 12 8"><path d="M1.500 1.500l4.500 4.500 4.500 -4.500" fill="none" stroke="#555" stroke-width="1.200"/></svg>
<svg class="abs" style="left:798px;top:257px" width="12" height="8" viewBox="0 0 12 8"><path d="M1.500 1.500l4.500 4.500 4.500 -4.500" fill="none" stroke="#555" stroke-width="1.200"/></svg>
<div class="btn" style="left:672px;top:278px;width:143px;height:25px;background:#e3e3e3;border-color:#c2c2c2"></div>
<div class="t" style="left:676px;top:283.500px;font-size:14px;font-weight:bold;color:#111;font-family:'DejaVu Sans Condensed','Liberation Sans',sans-serif;letter-spacing:-0.161px">Завершить</div>
<svg class="abs" style="left:798px;top:287px" width="12" height="8" viewBox="0 0 12 8"><path d="M1.500 1.500l4.500 4.500 4.500 -4.500" fill="none" stroke="#666" stroke-width="1.200"/></svg>

<!-- legend panel -->
<div class="panel" style="left:502px;top:314px;width:129px;height:247px;border:1px solid;border-color:#b8b8b8 #dcdcdc #dcdcdc #b8b8b8"></div>
<div class="panel" style="left:631px;top:314px;width:186px;height:247px;border:1px solid;border-color:#b8b8b8 #dcdcdc #dcdcdc #c0c0c0"></div>

<div class="lgl" style="left:500px;top:333px">5</div><div class="lg" style="left:532px;top:325px;background:#ececec"></div><div class="lgc" style="left:548px;top:333px">1107845</div>
<div class="lgl" style="left:500px;top:367px">20</div><div class="lg" style="left:532px;top:359px;background:#b0b0b6"></div><div class="lgc" style="left:548px;top:367px">113169</div>
<div class="lgl" style="left:500px;top:401px">50</div><div class="lg" style="left:532px;top:393px;background:#808080"></div><div class="lgc" style="left:548px;top:401px">2</div>
<div class="lgl" style="left:500px;top:434px">200</div><div class="lg" style="left:532px;top:426px;background:#00ff00"></div><div class="lgc" style="left:548px;top:434px">0</div>
<div class="lgl" style="left:500px;top:468px">600</div><div class="lg" style="left:532px;top:460px;background:#ff8000"></div><div class="lgc" style="left:548px;top:468px">0</div>
<div class="lgl" style="left:490.500px;top:501px">&gt;</div><div class="lg" style="left:532px;top:494px;background:#ff0000"></div><div class="lgc" style="left:548px;top:502px">0</div>
<div class="lgl" style="left:498px;top:532px;font-size:14.5px">Err</div><div class="abs" style="left:532px;top:526px;width:11px;height:20px;background:#0000ff"></div><div class="t" style="left:532.300px;top:528.500px;color:#fff;font-weight:bold;font-size:16px;line-height:16px;font-family:'DejaVu Sans',sans-serif">x</div><div class="lgc" style="left:548px;top:532px;color:#e02038">0</div>

<!-- stats -->
<div class="blk" style="left:636px;top:321px;width:94px;height:23px"></div>
<div class="t" style="left:642px;top:326px;color:#10e0ee;font-weight:bold;font-size:13px;font-family:'DejaVu Sans Condensed','Liberation Sans',sans-serif;letter-spacing:0.198px">160,04 GB</div>
<div class="blk" style="left:742px;top:321px;width:72px;height:23px"></div>
<div class="t" style="left:750px;top:324px;color:#fff;font-size:16px">100</div>
<div class="t" style="left:792px;top:324px;color:#fff;font-size:16px">%</div>
<div class="blk" style="left:636px;top:354px;width:94px;height:23px"></div>
<div class="t" style="left:642px;top:359px;color:#38b848;font-weight:bold;font-size:13px;letter-spacing:.4px;font-family:'DejaVu Sans Condensed','Liberation Sans',sans-serif;letter-spacing:0.509px">38 MB/s</div>
<div class="chk" style="left:640px;top:389px;width:13px;height:13px;border-color:#e6e6e6"></div>
<div class="t" style="left:659px;top:389px;font-size:14px;color:#8c8c98;letter-spacing:-0.514px">DDD (API)</div>
<div class="radio" style="left:743px;top:358px"></div><div class="rl" style="left:763px;top:359px;letter-spacing:-0.430px">Вериф.</div>
<div class="radio on" style="left:743px;top:383px"></div><div class="rl" style="left:763px;top:384px">Чтение</div>
<div class="radio" style="left:743px;top:408px"></div><div class="rl" style="left:763px;top:409px">Запись</div>

<!-- play buttons -->
<div class="abs" style="left:636px;top:433px;width:180px;height:35px;background:#d0d0d0;border-top:1px solid #b6b6b6;border-bottom:1px solid #f8f8f8"></div>
<div class="btn" style="left:644px;top:439px;width:27px;height:22px;background:#d4d4d4;border-color:#9a9a9a #fafafa #fafafa #9a9a9a"></div>
<div class="btn" style="left:689px;top:439px;width:27px;height:22px;background:#c8c8c8;border-color:#f4f4f4 #9c9c9c #9c9c9c #f4f4f4"></div>
<div class="btn" style="left:734px;top:439px;width:27px;height:22px;background:#c8c8c8;border-color:#f4f4f4 #9c9c9c #9c9c9c #f4f4f4"></div>
<div class="btn" style="left:777.500px;top:439px;width:27px;height:22px;background:#c8c8c8;border-color:#f4f4f4 #9c9c9c #9c9c9c #f4f4f4"></div>
<svg class="abs" style="left:636px;top:430px" width="184" height="40" viewBox="636 430 184 40">
  <path d="M650.500 443.200l17.300 7 -17.300 7z" fill="#22cc10" stroke="#0c5008" stroke-width="1.200" stroke-linejoin="round"/>
  <path d="M710.200 443.200l-17.500 7 17.500 7z" fill="#8a8a8a" stroke="#303030" stroke-width="1.200" stroke-linejoin="round"/>
  <path d="M736.500 444.500l5.800 5.900 -5.800 5.900z" fill="#8a8a8a" stroke="#303030" stroke-width="1"/>
  <path d="M758.500 444.500l-5.800 5.900 5.800 5.900z" fill="#8a8a8a" stroke="#303030" stroke-width="1"/>
  <path d="M780 444.300l6.200 6.100 -6.200 6.100z" fill="#8a8a8a" stroke="#303030" stroke-width="1"/>
  <path d="M801.500 444.300l-6.200 6.100 6.200 6.100z" fill="#8a8a8a" stroke="#303030" stroke-width="1"/>
  <path d="M791 443.500v14" stroke="#111" stroke-width="2"/>
</svg>
<div class="t" style="left:742.300px;top:443px;font-size:15px;font-weight:bold;color:#111">?</div>

<!-- action radios -->
<div class="abs" style="left:636px;top:470px;width:180px;height:51px;background:#d6d6d6;border-top:1px solid #bcbcbc;border-bottom:1px solid #f6f6f6"></div>
<div class="radio on" style="left:643px;top:478px"></div><div class="rl" style="left:663px;top:479px">Игнор</div>
<div class="radio" style="left:731px;top:478px"></div><div class="rl" style="left:751px;top:479px">Стереть</div>
<div class="radio" style="left:643px;top:502px"></div><div class="rl" style="left:663px;top:503px">Починить</div>
<div class="radio" style="left:731px;top:502px"></div><div class="rl" style="left:751px;top:503px">Обновить</div>
<div class="abs" style="left:636px;top:523px;width:180px;height:4px;background:#c2c2c2"></div>
<!-- grid checkbox + LED -->
<div class="chk" style="left:640px;top:538px"><svg width="14" height="14" viewBox="0 0 14 14"><path d="M2.500 6.500l3 3.200 5.500 -6.500" fill="none" stroke="#333" stroke-width="1.300"/></svg></div>
<div class="t" style="left:659px;top:538px;font-size:14px;font-weight:bold;color:#14148c;font-family:'DejaVu Sans Condensed','Liberation Sans',sans-serif;letter-spacing:-0.523px">Grid</div>
<div class="abs" style="left:698px;top:532px;width:117px;height:23px;background:#081200;border:1px solid #8c8c8c;border-right-color:#f4f4f4;border-bottom-color:#f4f4f4"></div>
<div class="t" style="left:697.300px;top:532.500px;font-family:'Liberation Mono',monospace;font-size:24px;line-height:24px;letter-spacing:.4px;color:#84841a;font-weight:bold">00<span style="margin:0 -2.850px;color:#5a5a12">:</span>00<span style="margin:0 -2.850px;color:#5a5a12">:</span>00</div>
<div class="abs" style="left:699px;top:533px;width:115px;height:21px;background-image:repeating-linear-gradient(0deg,rgba(8,18,0,.8) 0,rgba(8,18,0,.8) 1px,rgba(8,18,0,.15) 1px,rgba(8,18,0,.15) 2.200px),repeating-linear-gradient(90deg,rgba(8,18,0,.8) 0,rgba(8,18,0,.8) 1px,rgba(8,18,0,.15) 1px,rgba(8,18,0,.15) 2.200px)"></div>

<!-- table -->
<div class="abs" style="left:502px;top:564px;width:316px;height:85px;background:#fff;border:1px solid #adb1b9"></div>
<div class="abs" style="left:503px;top:611px;width:314px;height:1px;background:#ededed"></div>
<div class="abs" style="left:503px;top:631px;width:314px;height:1px;background:#ededed"></div>
<div class="abs" style="left:612px;top:565px;width:1px;height:83px;background:#f0f0f0"></div>
<div class="abs" style="left:677px;top:565px;width:1px;height:83px;background:#f0f0f0"></div>
<div class="abs" style="left:786px;top:565px;width:1px;height:83px;background:#f0f0f0"></div>
<div class="abs" style="left:612px;top:565px;width:1px;height:27px;background:#e0e0e0"></div>
<div class="abs" style="left:677px;top:565px;width:1px;height:27px;background:#e0e0e0"></div>
<div class="abs" style="left:786px;top:565px;width:1px;height:27px;background:#e0e0e0"></div>
<div class="t" style="left:510px;top:573px;font-size:13.5px">Start LBA</div>
<div class="t" style="left:619px;top:573px;font-size:13.5px">Block</div>
<div class="t" style="left:685px;top:573px;font-size:13.5px">Comment</div>

<!-- side panel -->
<div class="abs" style="left:820px;top:140px;width:80px;height:512px;background:#a0a0a0;border-left:2px solid #e2e2e2"></div><div class="abs" style="left:822.400px;top:140px;width:1.400px;height:512px;background:#858585"></div><div class="abs" style="left:898.400px;top:140px;width:1.600px;height:512px;background:#c0c0c0"></div>
<div class="radio" style="left:834.500px;top:151.500px;width:12px;height:12px;background:#ececec;border-color:#d4d4d4"></div>
<div class="abs" style="left:837.500px;top:154.500px;width:6px;height:6px;border-radius:50%;background:#b4b4b4"></div>
<div class="t" style="left:853px;top:151px;font-size:14px;color:#7c7c7c">API</div>
<div class="radio" style="left:834.500px;top:175.500px;width:12px;height:12px;background:#fcfcfc;border-color:#d8d8d8"></div>
<div class="t" style="left:853px;top:175px;font-size:14px;color:#7c7c7c">PIO</div>
<div class="abs" style="left:831px;top:206px;width:21px;height:11px;background:#808080;border:1px solid #1a1a1a"></div>
<div class="btn" style="left:831px;top:239px;width:60px;height:23px;font-size:14px;line-height:23px;border-color:#e1e1e1;color:#151520">Sleep</div>
<div class="btn" style="left:831px;top:306.500px;width:60px;height:23px;font-size:14px;line-height:23px;border-color:#e1e1e1;color:#151520">Recall</div>
<div class="abs" style="left:829px;top:526.200px;width:30px;height:14.600px;background:#9a9a9e;border:1.700px solid #3c3c3c;border-radius:3.500px;color:#b8b8b8;font-size:10.500px;font-weight:bold;line-height:11.400px;text-align:center">WR</div>
<div class="abs" style="left:864px;top:526.200px;width:30px;height:14.600px;background:#9a9a9e;border:1.700px solid #3c3c3c;border-radius:3.500px;color:#b8b8b8;font-size:10.500px;font-weight:bold;line-height:11.400px;text-align:center">RD</div>
<div class="btn" style="left:831px;top:603px;width:60px;height:23px;font-size:13.600px;line-height:21px;border-color:#e1e1e1;color:#151520">Passp</div>
<!-- lower side -->
<div class="abs" style="left:821px;top:658px;width:79px;height:135px;background:#a0a0a0;border-left:1px solid #8a8a8a"></div>
<div class="chk" style="left:832px;top:669px;width:13px;height:13px"><svg width="13" height="13" viewBox="0 0 13 13"><path d="M2 6l2.800 3 5.200 -6" fill="none" stroke="#333" stroke-width="1.300"/></svg></div>
<div class="t" style="left:851px;top:669px;font-size:13px;color:#151520">Звук</div>
<div class="chk" style="left:832px;top:694px;width:13px;height:13px"><svg width="13" height="13" viewBox="0 0 13 13"><path d="M2 6l2.800 3 5.200 -6" fill="none" stroke="#333" stroke-width="1.300"/></svg></div>
<div class="t" style="left:851px;top:694px;font-size:13px;color:#151520">Hints</div>

<!-- log -->
<div class="abs" style="left:0;top:651px;width:820px;height:3.600px;background:#fdfdfd"></div>
<div class="abs" style="left:0;top:658px;width:820px;height:135px;background:#f2f2f2;border-top:1px solid #868a92"></div>
<div class="abs" style="left:802px;top:659px;width:17px;height:134px;background:#f0f0f0"></div>
<div class="abs" style="left:802px;top:752px;width:17px;height:22px;background:#cdcdcd"></div>
<svg class="abs" style="left:802px;top:658px" width="17" height="20" viewBox="0 0 17 20" fill="none" stroke="#555" stroke-width="1.800"><path d="M4.500 14l4-4 4 4"/></svg>
<div class="abs" style="left:1px;top:681px;width:801px;height:1px;background:#eaeaea"></div>
<div class="abs" style="left:1px;top:703px;width:801px;height:1px;background:#eaeaea"></div>
<div class="abs" style="left:1px;top:725px;width:801px;height:1px;background:#eaeaea"></div>
<div class="abs" style="left:1px;top:746px;width:801px;height:1px;background:#eaeaea"></div>
<div class="abs" style="left:1px;top:768px;width:801px;height:1px;background:#eaeaea"></div>
<div class="abs" style="left:1px;top:790px;width:801px;height:1px;background:#eaeaea"></div>
<div class="abs" style="left:77px;top:658px;width:1px;height:135px;background:#eaeaea"></div>
<div class="log" style="left:10px;top:664px;letter-spacing:0.125px">10:34:51</div><div class="log" style="left:83px;top:664px;letter-spacing:-0.065px">Получение паспорта накопителя... OK</div>
<div class="log" style="left:10px;top:686px;letter-spacing:0.125px">10:34:51</div><div class="log" style="left:83px;top:686px;letter-spacing:-0.105px">Recallibration... OK</div>
<div class="log" style="left:10px;top:708px;letter-spacing:0.125px">10:34:51</div><div class="log" style="left:83px;top:708px;letter-spacing:-0.067px">Starting Reading, LBA=0..312579694, FULL, sequential access, timeout 10000ms</div>
<div class="log" style="left:10px;top:729px;letter-spacing:0.254px">11:22:07</div><div class="log" style="left:83px;top:729px;letter-spacing:.025px"><span style="letter-spacing:1.600px;font-size:19px;line-height:0;position:relative;top:3.500px">***</span> Scan results: no warnings, no errors. Last block at 312579694 (160 GB), time 47 minutes 16 seconds.</div>
<div class="log" style="left:10px;top:751px;letter-spacing:0.254px">11:22:07</div><div class="log" style="left:83px;top:751px;color:#2222ee;letter-spacing:0.009px">Speed: Maximum 69 MB/s. Average 51 MB/s. Minimum 34 MB/s. 457 points.</div>

</body>
</html>
